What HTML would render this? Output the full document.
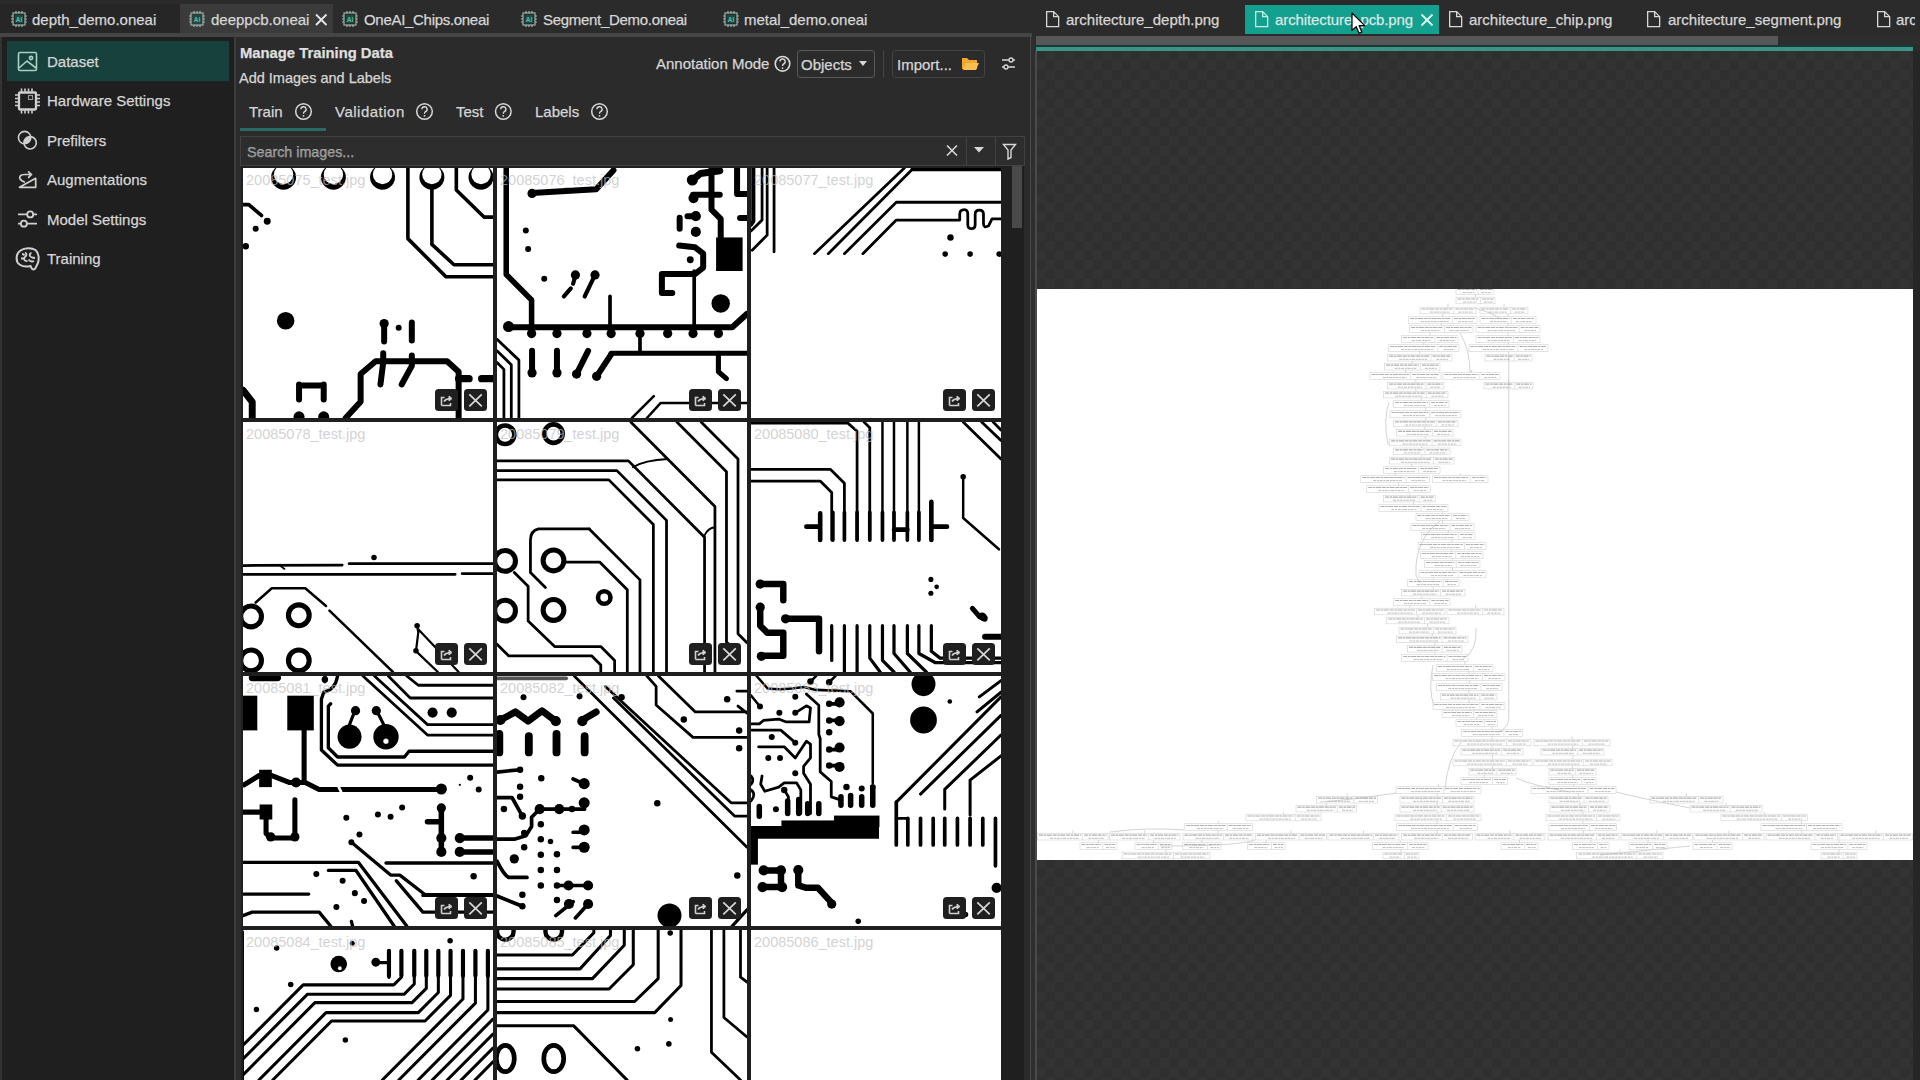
<!DOCTYPE html>
<html><head><meta charset="utf-8">
<style>
*{margin:0;padding:0;box-sizing:border-box}
html,body{width:1920px;height:1080px;overflow:hidden;background:#2b2b2b;font-family:"Liberation Sans",sans-serif;color:#d8d8d8}
.a{position:absolute}
.t{position:absolute;font-size:15px;line-height:17px;white-space:nowrap;color:#d6d6d6;-webkit-text-stroke:.25px #d6d6d6}
#viewer{left:1036px;top:51px;width:878px;height:1029px;background-color:#2f2f2f;
 background-image:linear-gradient(45deg,#333 25%,transparent 25%,transparent 75%,#333 75%),linear-gradient(45deg,#333 25%,transparent 25%,transparent 75%,#333 75%);
 background-size:19px 19px;background-position:0 0,9.5px 9.5px}
#arch{left:1037px;top:289px;width:876px;height:571px;background:#fff}
.tile{position:absolute;width:251px;height:250px;background:#fff;overflow:hidden}
.tile svg{position:absolute;left:0;top:0}
.lbl{position:absolute;left:3px;top:4px;font-size:14.5px;line-height:17px;color:rgba(190,190,190,.7);white-space:nowrap}
.btn{position:absolute;top:221px;width:23px;height:22px;background:#1f1f1f;border-radius:3.5px}
</style></head><body>
<div id="viewer" class="a"></div>
<div id="arch" class="a"></div>
<!-- LEFT TAB BAR -->
<div class="a" style="left:0;top:0;width:1032px;height:33px;background:#2b2b2b"></div>
<div class="a" style="left:0;top:4px;width:180px;height:29px;background:#262626"></div>
<div class="a" style="left:180px;top:4px;width:153px;height:29px;background:#3b3b3b"></div>
<div class="a" style="left:0;top:33px;width:1032px;height:4px;background:#454545"></div>
<svg class="a" style="left:0;top:0" width="1032" height="33">
 
 <g transform="translate(10,10)">
  <rect x="3" y="3" width="12" height="12" fill="none" stroke="#8fa8a0" stroke-width="1.3"/>
  <rect x="5" y="5" width="8" height="8" fill="#1d4a40"/>
  <path d="M6 1v2M9 1v2M12 1v2M6 15v2M9 15v2M12 15v2M1 6h2M1 9h2M1 12h2M15 6h2M15 9h2M15 12h2" stroke="#a8b8b2" stroke-width="1.2"/>
  <text x="9" y="11.5" font-size="6.5" text-anchor="middle" fill="#4fc0a8" font-family="Liberation Sans" font-weight="bold">AI</text>
 </g>
 <g transform="translate(188,10)">
  <rect x="3" y="3" width="12" height="12" fill="none" stroke="#8fa8a0" stroke-width="1.3"/>
  <rect x="5" y="5" width="8" height="8" fill="#1d4a40"/>
  <path d="M6 1v2M9 1v2M12 1v2M6 15v2M9 15v2M12 15v2M1 6h2M1 9h2M1 12h2M15 6h2M15 9h2M15 12h2" stroke="#a8b8b2" stroke-width="1.2"/>
  <text x="9" y="11.5" font-size="6.5" text-anchor="middle" fill="#4fc0a8" font-family="Liberation Sans" font-weight="bold">AI</text>
 </g>
 <g transform="translate(341,10)">
  <rect x="3" y="3" width="12" height="12" fill="none" stroke="#8fa8a0" stroke-width="1.3"/>
  <rect x="5" y="5" width="8" height="8" fill="#1d4a40"/>
  <path d="M6 1v2M9 1v2M12 1v2M6 15v2M9 15v2M12 15v2M1 6h2M1 9h2M1 12h2M15 6h2M15 9h2M15 12h2" stroke="#a8b8b2" stroke-width="1.2"/>
  <text x="9" y="11.5" font-size="6.5" text-anchor="middle" fill="#4fc0a8" font-family="Liberation Sans" font-weight="bold">AI</text>
 </g>
 <g transform="translate(520,10)">
  <rect x="3" y="3" width="12" height="12" fill="none" stroke="#8fa8a0" stroke-width="1.3"/>
  <rect x="5" y="5" width="8" height="8" fill="#1d4a40"/>
  <path d="M6 1v2M9 1v2M12 1v2M6 15v2M9 15v2M12 15v2M1 6h2M1 9h2M1 12h2M15 6h2M15 9h2M15 12h2" stroke="#a8b8b2" stroke-width="1.2"/>
  <text x="9" y="11.5" font-size="6.5" text-anchor="middle" fill="#4fc0a8" font-family="Liberation Sans" font-weight="bold">AI</text>
 </g>
 <g transform="translate(722,10)">
  <rect x="3" y="3" width="12" height="12" fill="none" stroke="#8fa8a0" stroke-width="1.3"/>
  <rect x="5" y="5" width="8" height="8" fill="#1d4a40"/>
  <path d="M6 1v2M9 1v2M12 1v2M6 15v2M9 15v2M12 15v2M1 6h2M1 9h2M1 12h2M15 6h2M15 9h2M15 12h2" stroke="#a8b8b2" stroke-width="1.2"/>
  <text x="9" y="11.5" font-size="6.5" text-anchor="middle" fill="#4fc0a8" font-family="Liberation Sans" font-weight="bold">AI</text>
 </g>
 <path d="M316 14.5l10.5 10.5M326.5 14.5l-10.5 10.5" stroke="#e8e8e8" stroke-width="1.8"/>
</svg>
<div class="t" style="left:32px;top:11px">depth_demo.oneai</div>
<div class="t" style="left:211px;top:11px">deeppcb.oneai</div>
<div class="t" style="left:364px;top:11px;letter-spacing:-.3px">OneAI_Chips.oneai</div>
<div class="t" style="left:543px;top:11px;letter-spacing:-.3px">Segment_Demo.oneai</div>
<div class="t" style="left:744px;top:11px">metal_demo.oneai</div>

<!-- SIDEBAR -->
<div class="a" style="left:2px;top:37px;width:232px;height:1043px;background:#1f1f1f"></div>
<div class="a" style="left:0;top:37px;width:2px;height:1043px;background:#333"></div>
<div class="a" style="left:7px;top:41px;width:222px;height:40px;background:#17413d"></div>
<div class="a" style="left:234px;top:37px;width:2px;height:1043px;background:#3c3c3c"></div>
<svg class="a" style="left:0;top:37px" width="233" height="240" fill="none" stroke="#d0d0d0" stroke-width="1.6">
 <!-- dataset -->
 <rect x="18.5" y="15.5" width="18" height="18" rx="1.5" stroke="#a9cfc7"/>
 <path d="M19 31l8-7 9 7" stroke="#a9cfc7"/>
 <circle cx="31" cy="21" r="1.6" stroke="#a9cfc7"/>
 <!-- hardware -->
 <rect x="19" y="55.5" width="17" height="17" rx="1" stroke-width="2.3"/>
 <rect x="28.5" y="58.5" width="4" height="4" stroke-width="1.1" stroke="#9a9a9a"/>
 <path d="M21.5 51.5v3M25 51.5v3M28.5 51.5v3M32 51.5v3M21.5 73.5v3M25 73.5v3M28.5 73.5v3M32 73.5v3M15 58h3M15 61.5h3M15 65h3M15 68.5h3M37 58h3M37 61.5h3M37 65h3M37 68.5h3" stroke-width="1.6"/>
 <!-- prefilters -->
 <path d="M23.98 106.77A6.2 6.2 0 0 1 30.72 99.63A6.2 6.2 0 0 1 23.98 106.77Z" fill="#d0d0d0" stroke="none"/>
 <circle cx="24.6" cy="100.6" r="6.2"/>
 <circle cx="30.1" cy="105.8" r="6.2"/>
 <!-- augmentations -->
 <path d="M19.5 150.3H35.7V141.3Z" stroke-linejoin="round" stroke-width="1.7"/>
 <path d="M24.3 145c-3.5-1.5-5.5-3.5-4.3-5.7c1-1.6 3-1.8 5-1.8h6.2M28.6 134.8l2.8 2.7-2.8 2.8" stroke-width="1.7" stroke-linecap="round"/>
 <!-- model settings -->
 <path d="M18 177.4h19M18 186.7h19" stroke-width="1.8"/>
 <circle cx="30.2" cy="177.4" r="3" fill="#1f1f1f" stroke-width="1.8"/>
 <circle cx="23.9" cy="186.7" r="3" fill="#1f1f1f" stroke-width="1.8"/>
 <!-- training brain -->
 <path d="M19.5 227.5C15.5 225 15.5 216.5 20.5 213.5C24.5 210.5 32 210.5 35.5 213C39 216 39.5 223 37.5 227L35.5 231C34.5 233 32.5 233 31.5 231L30.5 229C26.5 230 22.5 229.5 19.5 227.5Z" stroke-width="2"/>
 <path d="M21 221.5h3.5M25 215.5c2 1 2 3 0 4.5c-2 1.5-.5 4.5 2.5 4M31.5 216c-2.5 .5-2.5 3.5 .5 4.5l3 .5M28.5 222.5c1.5 2 3.5 2.5 5.5 1.5M22 217c1 0 2 .5 2.5 1.5" stroke-width="1.8"/>
</svg>
<div class="t" style="left:47px;top:53px">Dataset</div>
<div class="t" style="left:47px;top:92px">Hardware Settings</div>
<div class="t" style="left:47px;top:132px">Prefilters</div>
<div class="t" style="left:47px;top:171px">Augmentations</div>
<div class="t" style="left:47px;top:211px">Model Settings</div>
<div class="t" style="left:47px;top:250px">Training</div>

<!-- MAIN PANEL -->
<div class="a" style="left:236px;top:37px;width:795px;height:1043px;background:#2b2b2b"></div>
<div class="t" style="left:240px;top:45px;font-weight:bold;font-size:14.8px;color:#e0e0e0">Manage Training Data</div>
<div class="t" style="left:239px;top:70px;font-size:14.5px">Add Images and Labels</div>
<div class="t" style="left:656px;top:55px">Annotation Mode</div>
<svg class="a" style="left:640px;top:40px" width="390" height="50" fill="none" stroke="#d8d8d8">
 <circle cx="142.5" cy="23.8" r="7.3" stroke-width="1.6"/><path d="M140 21.6a2.6 2.6 0 1 1 3.6 2.4c-.9.4-1 1-1 2" stroke-width="1.4"/><circle cx="142.5" cy="28.1" r=".9" fill="#d8d8d8" stroke="none"/>
 <rect x="157.5" y="10.5" width="77" height="27" rx="3" stroke="#5a5a5a"/>
 <path d="M219 21h8l-4 5z" fill="#d8d8d8" stroke="none"/>
 <path d="M243.5 10v28" stroke="#444"/>
 <rect x="252.5" y="10.5" width="92" height="27" rx="3" stroke="#444"/>
 <path d="M322 18h5l2 2h8v9h-15z" fill="#f0a830" stroke="none"/>
 <path d="M323 30l3-7h13l-3 7z" fill="#f7be50" stroke="none"/>
 <path d="M362 20h13M362 27h13" stroke-width="1.4"/>
 <circle cx="371" cy="20" r="2" fill="#2b2b2b" stroke-width="1.3"/>
 <circle cx="366" cy="27" r="2" fill="#2b2b2b" stroke-width="1.3"/>
</svg>
<div class="t" style="left:801px;top:56px">Objects</div>
<div class="t" style="left:897px;top:56px">Import...</div>
<div class="t" style="left:249px;top:103px">Train</div>
<div class="t" style="left:335px;top:103px;letter-spacing:.5px">Validation</div>
<div class="t" style="left:456px;top:103px">Test</div>
<div class="t" style="left:535px;top:103px">Labels</div>
<svg class="a" style="left:236px;top:90px" width="400" height="50" fill="none" stroke="#d8d8d8" stroke-width="1.5">
 
 <g transform="translate(67.5,21.5)"><circle cx="0" cy="0" r="7.8"/><path d="M-2.6 -2.2a2.6 2.6 0 1 1 3.6 2.4c-.9.4-1 1-1 2" stroke-width="1.4"/><circle cx="0" cy="4.3" r=".9" fill="#d8d8d8" stroke="none"/></g>
 <g transform="translate(188.5,21.5)"><circle cx="0" cy="0" r="7.8"/><path d="M-2.6 -2.2a2.6 2.6 0 1 1 3.6 2.4c-.9.4-1 1-1 2" stroke-width="1.4"/><circle cx="0" cy="4.3" r=".9" fill="#d8d8d8" stroke="none"/></g>
 <g transform="translate(267.3,21.5)"><circle cx="0" cy="0" r="7.8"/><path d="M-2.6 -2.2a2.6 2.6 0 1 1 3.6 2.4c-.9.4-1 1-1 2" stroke-width="1.4"/><circle cx="0" cy="4.3" r=".9" fill="#d8d8d8" stroke="none"/></g>
 <g transform="translate(363.5,21.5)"><circle cx="0" cy="0" r="7.8"/><path d="M-2.6 -2.2a2.6 2.6 0 1 1 3.6 2.4c-.9.4-1 1-1 2" stroke-width="1.4"/><circle cx="0" cy="4.3" r=".9" fill="#d8d8d8" stroke="none"/></g>
 <path d="M4 39.5h86" stroke="#2a6a62" stroke-width="3"/>
</svg>
<!-- search -->
<div class="a" style="left:240px;top:136px;width:785px;height:30px;background:#2d2d2d;border:1px solid #414141"></div>
<div class="a" style="left:966px;top:137px;width:1px;height:28px;background:#414141"></div>
<div class="a" style="left:995px;top:137px;width:1px;height:28px;background:#414141"></div>
<div class="t" style="left:247px;top:144px;color:#8a8a8a;font-size:14.3px">Search images...</div>
<svg class="a" style="left:940px;top:136px" width="90" height="30" fill="none" stroke="#d8d8d8" stroke-width="1.6">
 <path d="M7 9.5l10 10M17 9.5l-10 10"/>
 <path d="M34 11h10l-5 5.5z" fill="#d8d8d8" stroke="none"/>
 <path d="M63.5 8.5h12l-4.5 5.5v7.5l-3 1.5v-9z" stroke-width="1.4"/>
</svg>
<!-- scroll area -->
<div class="a" style="left:241px;top:166px;width:783px;height:914px;background:#1f1f1f"></div>
<div class="a" style="left:1012px;top:166px;width:10px;height:62px;background:#4a4a4a"></div>
<div class="a" style="left:1030px;top:37px;width:1px;height:1043px;background:#4a4a4a"></div>
<div class="a" style="left:1031px;top:37px;width:4px;height:1043px;background:#2e2e2e"></div>

<!-- RIGHT TABS -->
<div class="a" style="left:1032px;top:0;width:888px;height:36px;background:#2b2b2b"></div>
<div class="a" style="left:1245px;top:5px;width:194px;height:29px;background:#14a08e"></div>
<svg class="a" style="left:1032px;top:0" width="888" height="36" fill="none" stroke="#d8d8d8" stroke-width="1.3">
 
 <g transform="translate(14,11)"><path d="M.65 .65h7l5 5v10h-12z M7.65 .65v5h5"/></g>
 <g transform="translate(223,11)" stroke="#c8f0ea"><path d="M.65 .65h7l5 5v10h-12z M7.65 .65v5h5"/></g>
 <g transform="translate(417,11)"><path d="M.65 .65h7l5 5v10h-12z M7.65 .65v5h5"/></g>
 <g transform="translate(615,11)"><path d="M.65 .65h7l5 5v10h-12z M7.65 .65v5h5"/></g>
 <g transform="translate(845,11)"><path d="M.65 .65h7l5 5v10h-12z M7.65 .65v5h5"/></g>
 <path d="M389.5 14.5l11 11M400.5 14.5l-11 11" stroke="#e0f5f2" stroke-width="1.8"/>
</svg>
<div class="t" style="left:1066px;top:11px">architecture_depth.png</div>
<div class="t" style="left:1275px;top:11px;color:#d8f3ef;letter-spacing:-.1px">architecture_pcb.png</div>
<div class="t" style="left:1469px;top:11px">architecture_chip.png</div>
<div class="t" style="left:1668px;top:11px">architecture_segment.png</div>
<div class="a" style="left:1896px;top:0;width:19px;height:36px;overflow:hidden"><div class="t" style="left:0;top:11px">arc</div></div>
<div class="a" style="left:1036px;top:36px;width:742px;height:9px;background:#575757"></div>
<div class="a" style="left:1778px;top:36px;width:142px;height:9px;background:#2d2d2d"></div>
<div class="a" style="left:1036px;top:45px;width:877px;height:2px;background:#173a35"></div>
<div class="a" style="left:1036px;top:47px;width:877px;height:4px;background:#3a9486"></div>
<div class="a" style="left:1035px;top:51px;width:2px;height:1029px;background:#4a4a4a"></div>
<div class="a" style="left:1913px;top:51px;width:7px;height:1029px;background:#262626"></div>
<div class="tile" style="left:243px;top:168px;width:250px"><svg width="250" height="250" viewBox="0 0 1084 1080" preserveAspectRatio="none"><g fill="none" stroke="#000" stroke-linecap="round" stroke-linejoin="round">
<circle cx="176" cy="40" r="54" fill="#000" stroke="none"/><circle cx="176" cy="28" r="42" fill="#fff" stroke="none"/><circle cx="392" cy="40" r="54" fill="#000" stroke="none"/><circle cx="392" cy="28" r="42" fill="#fff" stroke="none"/><circle cx="605" cy="40" r="54" fill="#000" stroke="none"/><circle cx="605" cy="28" r="42" fill="#fff" stroke="none"/><circle cx="819" cy="40" r="54" fill="#000" stroke="none"/><circle cx="819" cy="28" r="42" fill="#fff" stroke="none"/><circle cx="1032" cy="40" r="54" fill="#000" stroke="none"/><circle cx="1032" cy="28" r="42" fill="#fff" stroke="none"/>
<path d="M715 0V305L880 470H1084" stroke-width="15.6"/>
<path d="M819 90V330L915 418H1084" stroke-width="15.6"/>
<path d="M925 0V95L1045 212H1084" stroke-width="15.6"/>
<path d="M0 158H25L80 205" stroke-width="16"/>
<circle cx="105" cy="230" r="15" fill="#000" stroke="none"/><circle cx="55" cy="262" r="13" fill="#000" stroke="none"/><circle cx="12" cy="338" r="14" fill="#000" stroke="none"/><circle cx="185" cy="660" r="38" fill="#000" stroke="none"/><circle cx="675" cy="690" r="13" fill="#000" stroke="none"/>
<path d="M445 1080L510 1010V890L575 835H885L935 880V1080" stroke-width="26"/>
<path d="M935 910H980" stroke-width="32"/>
<path d="M1035 910H1084" stroke-width="32"/>
<path d="M612 672V750" stroke-width="26"/>
<circle cx="612" cy="672" r="20" fill="#000" stroke="none"/>
<path d="M608 800V840L596 935" stroke-width="26"/>
<path d="M732 668V745" stroke-width="26"/>
<path d="M732 810V855L688 935" stroke-width="26"/>
<path d="M243 935V1000M350 935V1000M243 940H350" stroke-width="26"/>
<circle cx="243" cy="1075" r="24" fill="#000" stroke="none"/>
<circle cx="350" cy="1075" r="24" fill="#000" stroke="none"/>
<path d="M0 960L40 1010V1080" stroke-width="30"/>
</g></svg><div class="lbl">20085075_test.jpg</div><div class="btn" style="left:192px"><svg width="23" height="22" fill="none" stroke="#d0d0d0" stroke-width="1.6"><path d="M6.5 16.5V8.5H9.5M6.5 16.5H15.5V14M9 12.5Q10.5 10 15 9.5"/><path d="M14 7l3 2.5-3 2.5z" fill="#d0d0d0" stroke-width="1"/></svg></div><div class="btn" style="left:221px"><svg width="23" height="22" stroke="#d8d8d8" stroke-width="1.7"><path d="M5.3 5.3l12.5 12M17.8 5.3l-12.5 12"/></svg></div></div>
<div class="tile" style="left:497px;top:168px;width:250px"><svg width="250" height="250" viewBox="0 0 1084 1080" preserveAspectRatio="none"><g fill="none" stroke="#000" stroke-linecap="round" stroke-linejoin="round">
<path d="M40 0V460L150 570V700" stroke-width="24"/>
<path d="M150 108L430 92L505 10" stroke-width="26"/>
<circle cx="152" cy="110" r="20" fill="#000" stroke="none"/>
<circle cx="125" cy="270" r="13" fill="#000" stroke="none"/><circle cx="135" cy="350" r="13" fill="#000" stroke="none"/><circle cx="205" cy="478" r="13" fill="#000" stroke="none"/>
<path d="M340 465L330 500M320 520L290 555" stroke-width="18"/>
<circle cx="340" cy="462" r="20" fill="#000" stroke="none"/>
<path d="M425 462L380 555" stroke-width="18"/>
<circle cx="425" cy="462" r="20" fill="#000" stroke="none"/>
<path d="M50 688H1020L1084 630" stroke-width="26"/>
<circle cx="50" cy="685" r="24" fill="#000" stroke="none"/>
<circle cx="150" cy="715" r="20" fill="#000" stroke="none"/><circle cx="260" cy="715" r="20" fill="#000" stroke="none"/><circle cx="390" cy="715" r="20" fill="#000" stroke="none"/><circle cx="495" cy="715" r="20" fill="#000" stroke="none"/><circle cx="620" cy="715" r="20" fill="#000" stroke="none"/><circle cx="740" cy="715" r="20" fill="#000" stroke="none"/><circle cx="850" cy="715" r="20" fill="#000" stroke="none"/><circle cx="960" cy="715" r="20" fill="#000" stroke="none"/>
<path d="M495 800H1084" stroke-width="22"/>
<path d="M620 690V800" stroke-width="16"/>
<path d="M490 555V690" stroke-width="16"/>
<path d="M152 790V885M260 790V885M395 790L345 890M495 805L432 900" stroke-width="26"/>
<circle cx="152" cy="885" r="20" fill="#000" stroke="none"/><circle cx="260" cy="885" r="20" fill="#000" stroke="none"/><circle cx="345" cy="890" r="20" fill="#000" stroke="none"/><circle cx="432" cy="900" r="20" fill="#000" stroke="none"/>
<path d="M960 800V880L995 910" stroke-width="22"/>
<path d="M930 0V180L970 220V300" stroke-width="26"/><path d="M847 52L882 24L966 12" stroke-width="30"/>
<rect x="950" y="300" width="115" height="145" fill="#000" stroke="none"/>
<path d="M1041 0V112H1084M850 116H966M1054 216H1084M826 208H862M792 215V262" stroke-width="26"/>
<circle cx="847" cy="52" r="24" fill="#000" stroke="none"/><circle cx="852" cy="130" r="22" fill="#000" stroke="none"/><circle cx="862" cy="208" r="22" fill="#000" stroke="none"/><circle cx="862" cy="276" r="22" fill="#000" stroke="none"/><circle cx="838" cy="396" r="15" fill="#000" stroke="none"/>
<path d="M790 335L858 342L894 370V430L858 458H715V540H760" stroke-width="26"/>
<path d="M855 445V690" stroke-width="16"/>
<circle cx="970" cy="585" r="40" fill="#000" stroke="none"/>
<path d="M0 740L95 830V1080M0 790L62 850V1080M0 840L30 870V1080" stroke-width="12"/>
<path d="M585 1080L680 985M650 1080L710 1015H1084" stroke-width="10.8"/>
</g></svg><div class="lbl">20085076_test.jpg</div><div class="btn" style="left:192px"><svg width="23" height="22" fill="none" stroke="#d0d0d0" stroke-width="1.6"><path d="M6.5 16.5V8.5H9.5M6.5 16.5H15.5V14M9 12.5Q10.5 10 15 9.5"/><path d="M14 7l3 2.5-3 2.5z" fill="#d0d0d0" stroke-width="1"/></svg></div><div class="btn" style="left:221px"><svg width="23" height="22" stroke="#d8d8d8" stroke-width="1.7"><path d="M5.3 5.3l12.5 12M17.8 5.3l-12.5 12"/></svg></div></div>
<div class="tile" style="left:751px;top:168px;width:250px"><svg width="250" height="250" viewBox="0 0 1084 1080" preserveAspectRatio="none"><g fill="none" stroke="#000" stroke-linecap="round" stroke-linejoin="round">
<path d="M10 0V230L0 245" stroke-width="18"/>
<path d="M48 0V225L0 272" stroke-width="12"/>
<path d="M70 0V290L5 355" stroke-width="12"/>
<path d="M100 0V362" stroke-width="12"/>
<path d="M275 370L665 0M335 370L705 0M405 370L630 148H1084" stroke-width="12"/>
<path d="M485 370L630 225H905V200Q905 180 925 180Q940 180 940 200V245Q940 262 957 262Q972 262 972 245V200Q972 182 990 182Q1008 182 1008 200V240Q1008 262 1030 250L1045 220H1084" stroke-width="12"/>
<path d="M700 6H1084" stroke-width="16"/>
<circle cx="865" cy="300" r="14" fill="#000" stroke="none"/><circle cx="842" cy="372" r="12" fill="#000" stroke="none"/><circle cx="950" cy="372" r="12" fill="#000" stroke="none"/><circle cx="1076" cy="372" r="12" fill="#000" stroke="none"/>
</g></svg><div class="lbl">20085077_test.jpg</div><div class="btn" style="left:192px"><svg width="23" height="22" fill="none" stroke="#d0d0d0" stroke-width="1.6"><path d="M6.5 16.5V8.5H9.5M6.5 16.5H15.5V14M9 12.5Q10.5 10 15 9.5"/><path d="M14 7l3 2.5-3 2.5z" fill="#d0d0d0" stroke-width="1"/></svg></div><div class="btn" style="left:221px"><svg width="23" height="22" stroke="#d8d8d8" stroke-width="1.7"><path d="M5.3 5.3l12.5 12M17.8 5.3l-12.5 12"/></svg></div></div>
<div class="tile" style="left:243px;top:422px;width:250px"><svg width="250" height="250" viewBox="0 0 1084 1080" preserveAspectRatio="none"><g fill="none" stroke="#000" stroke-linecap="round" stroke-linejoin="round">
<path d="M0 620L430 618M460 612H1084M0 658H920M950 655H1084" stroke-width="12"/>
<circle cx="568" cy="585" r="12" fill="#000" stroke="none"/>
<path d="M160 620L180 635" stroke-width="7.2"/>
<circle cx="35" cy="840" r="45" stroke-width="22"/>
<circle cx="242" cy="835" r="45" stroke-width="22"/>
<circle cx="35" cy="1030" r="45" stroke-width="22"/>
<circle cx="242" cy="1030" r="45" stroke-width="22"/>
<path d="M55 780L125 718H270L360 795M375 815L650 1080" stroke-width="10.8"/>
<path d="M755 880L760 910L750 990L845 1080M760 895L935 1080" stroke-width="9.6"/>
<circle cx="755" cy="880" r="12" fill="#000" stroke="none"/><circle cx="750" cy="988" r="12" fill="#000" stroke="none"/>
</g></svg><div class="lbl">20085078_test.jpg</div><div class="btn" style="left:192px"><svg width="23" height="22" fill="none" stroke="#d0d0d0" stroke-width="1.6"><path d="M6.5 16.5V8.5H9.5M6.5 16.5H15.5V14M9 12.5Q10.5 10 15 9.5"/><path d="M14 7l3 2.5-3 2.5z" fill="#d0d0d0" stroke-width="1"/></svg></div><div class="btn" style="left:221px"><svg width="23" height="22" stroke="#d8d8d8" stroke-width="1.7"><path d="M5.3 5.3l12.5 12M17.8 5.3l-12.5 12"/></svg></div></div>
<div class="tile" style="left:497px;top:422px;width:250px"><svg width="250" height="250" viewBox="0 0 1084 1080" preserveAspectRatio="none"><g fill="none" stroke="#000" stroke-linecap="round" stroke-linejoin="round">
<circle cx="35" cy="55" r="40" stroke-width="20"/>
<circle cx="245" cy="50" r="40" stroke-width="20"/>
<path d="M0 168H570L900 498V1080" stroke-width="12"/>
<path d="M0 210H520L735 425V1080" stroke-width="12"/>
<path d="M0 250H485L678 443V1080" stroke-width="12"/>
<path d="M580 0L945 365V1080" stroke-width="12"/>
<path d="M780 0L995 215V950L1040 995" stroke-width="12"/>
<path d="M885 0L1045 160V915L1084 954" stroke-width="12"/>
<path d="M590 195Q640 165 740 160M900 490Q915 458 945 455" stroke-width="8.4"/>
<path d="M400 462L620 682V1080" stroke-width="12"/>
<path d="M400 462H180Q145 470 145 510V650L210 715" stroke-width="12"/>
<path d="M295 605H445L565 725V1080" stroke-width="12"/>
<circle cx="35" cy="600" r="45" stroke-width="22"/>
<circle cx="245" cy="598" r="45" stroke-width="22"/>
<circle cx="35" cy="815" r="45" stroke-width="22"/>
<circle cx="245" cy="812" r="45" stroke-width="22"/>
<circle cx="465" cy="758" r="27" stroke-width="20"/>
<path d="M75 650L135 710V860L250 970H450L510 1030V1080" stroke-width="12"/>
<path d="M0 960L50 1010H410L450 1050V1080" stroke-width="12"/>
</g></svg><div class="lbl">20085079_test.jpg</div><div class="btn" style="left:192px"><svg width="23" height="22" fill="none" stroke="#d0d0d0" stroke-width="1.6"><path d="M6.5 16.5V8.5H9.5M6.5 16.5H15.5V14M9 12.5Q10.5 10 15 9.5"/><path d="M14 7l3 2.5-3 2.5z" fill="#d0d0d0" stroke-width="1"/></svg></div><div class="btn" style="left:221px"><svg width="23" height="22" stroke="#d8d8d8" stroke-width="1.7"><path d="M5.3 5.3l12.5 12M17.8 5.3l-12.5 12"/></svg></div></div>
<div class="tile" style="left:751px;top:422px;width:250px"><svg width="250" height="250" viewBox="0 0 1084 1080" preserveAspectRatio="none"><g fill="none" stroke="#000" stroke-linecap="round" stroke-linejoin="round">
<path d="M0 5H420L460 40V510M490 0L515 25V510" stroke-width="12"/>
<path d="M570 0V510M620 0V510M678 0V510M728 0V510" stroke-width="10.8"/>
<path d="M0 205H345L405 265V510M0 255H300L350 305V510" stroke-width="12"/>
<path d="M300 395V510M782 345V510M240 452H300M782 452H850M620 465H678" stroke-width="20"/>
<path d="M355 390V510M405 390V510M460 390V510M515 390V510M570 390V510M620 390V510M678 390V510M728 390V510" stroke-width="16"/>
<path d="M920 0L1084 160M1000 0L1084 80M1050 0L1084 35" stroke-width="12"/>
<path d="M920 235V415L1075 550" stroke-width="10.8"/>
<circle cx="920" cy="237" r="12" fill="#000" stroke="none"/>
<circle cx="780" cy="680" r="11" fill="#000" stroke="none"/><circle cx="805" cy="712" r="10" fill="#000" stroke="none"/><circle cx="780" cy="740" r="11" fill="#000" stroke="none"/>
<path d="M960 805L990 840Q1020 860 1015 845Q1005 825 990 840" stroke-width="22"/>
<path d="M35 700H140V770M40 800V880L70 910H140V1010H40M150 850H295V990" stroke-width="28"/>
<circle cx="40" cy="700" r="20" fill="#000" stroke="none"/><circle cx="40" cy="800" r="20" fill="#000" stroke="none"/><circle cx="150" cy="850" r="20" fill="#000" stroke="none"/><circle cx="45" cy="1012" r="20" fill="#000" stroke="none"/>
<path d="M1015 928H1084" stroke-width="26"/>
<path d="M350 880V1030M405 880V1080M460 880V1080M515 880V1020L560 1080M570 880V1030L620 1080M620 880V1000L690 1080M678 880V1000L760 1080M728 880V1000L800 1040H1084M782 880V990L820 1020H1084" stroke-width="14"/>
</g></svg><div class="lbl">20085080_test.jpg</div><div class="btn" style="left:192px"><svg width="23" height="22" fill="none" stroke="#d0d0d0" stroke-width="1.6"><path d="M6.5 16.5V8.5H9.5M6.5 16.5H15.5V14M9 12.5Q10.5 10 15 9.5"/><path d="M14 7l3 2.5-3 2.5z" fill="#d0d0d0" stroke-width="1"/></svg></div><div class="btn" style="left:221px"><svg width="23" height="22" stroke="#d8d8d8" stroke-width="1.7"><path d="M5.3 5.3l12.5 12M17.8 5.3l-12.5 12"/></svg></div></div>
<div class="tile" style="left:243px;top:676px;width:250px"><svg width="250" height="250" viewBox="0 0 1084 1080" preserveAspectRatio="none"><g fill="none" stroke="#000" stroke-linecap="round" stroke-linejoin="round">
<path d="M40 8H150" stroke-width="30"/><circle cx="355" cy="15" r="14" fill="#000" stroke="none"/>
<rect x="0" y="85" width="62" height="150" fill="#000" stroke="none"/>
<rect x="192" y="85" width="115" height="150" fill="#000" stroke="none"/>
<path d="M265 230V460M5 470L70 430H125L200 460L270 460L330 490H860" stroke-width="22"/>
<rect x="70" y="405" width="55" height="75" fill="#000" stroke="none"/>
<circle cx="230" cy="460" r="22" fill="#000" stroke="none"/>
<circle cx="860" cy="488" r="24" fill="#000" stroke="none"/>
<path d="M415 480L425 500" stroke="#fff" stroke-width="12"/>
<path d="M0 588H100V680L120 700H225V535" stroke-width="22"/>
<rect x="72" y="555" width="55" height="65" fill="#000" stroke="none"/>
<circle cx="120" cy="695" r="20" fill="#000" stroke="none"/><circle cx="225" cy="695" r="20" fill="#000" stroke="none"/>
<path d="M355 0V25M410 0Q400 60 350 70L340 100V320L410 385H1084M380 120L370 130V310L410 350H700L720 325H1084" stroke-width="14.4"/>
<path d="M520 0L800 255H1084M570 0L800 210H1084M630 0L725 95H1084M710 0L760 40H1084" stroke-width="12"/>
<circle cx="462" cy="262" r="52" fill="#000" stroke="none"/>
<circle cx="620" cy="262" r="55" fill="#000" stroke="none"/>
<circle cx="620" cy="282" r="12" fill="#fff"/>
<path d="M460 215L485 150M610 210L580 150" stroke-width="14"/>
<circle cx="488" cy="150" r="20" fill="#000" stroke="none"/><circle cx="578" cy="150" r="20" fill="#000" stroke="none"/><circle cx="822" cy="158" r="22" fill="#000" stroke="none"/><circle cx="905" cy="158" r="22" fill="#000" stroke="none"/><circle cx="985" cy="440" r="13" fill="#000" stroke="none"/><circle cx="1022" cy="490" r="13" fill="#000" stroke="none"/><circle cx="940" cy="470" r="5" fill="#000" stroke="none"/><circle cx="448" cy="612" r="13" fill="#000" stroke="none"/><circle cx="585" cy="598" r="13" fill="#000" stroke="none"/><circle cx="640" cy="608" r="13" fill="#000" stroke="none"/><circle cx="690" cy="568" r="13" fill="#000" stroke="none"/><circle cx="505" cy="685" r="13" fill="#000" stroke="none"/><circle cx="470" cy="718" r="13" fill="#000" stroke="none"/><circle cx="318" cy="855" r="13" fill="#000" stroke="none"/><circle cx="432" cy="885" r="13" fill="#000" stroke="none"/><circle cx="485" cy="938" r="13" fill="#000" stroke="none"/><circle cx="525" cy="972" r="13" fill="#000" stroke="none"/><circle cx="405" cy="998" r="13" fill="#000" stroke="none"/><circle cx="1000" cy="865" r="14" fill="#000" stroke="none"/>
<path d="M860 570V760M800 630H860M940 700H1084M940 760H1084" stroke-width="24"/>
<circle cx="860" cy="570" r="20" fill="#000" stroke="none"/><circle cx="860" cy="700" r="22" fill="#000" stroke="none"/><circle cx="860" cy="760" r="22" fill="#000" stroke="none"/><circle cx="940" cy="700" r="22" fill="#000" stroke="none"/><circle cx="940" cy="760" r="22" fill="#000" stroke="none"/>
<path d="M0 805H500L710 1080M470 718L640 860L680 860L790 945H1084M620 808H1084M370 840H490L655 1080M665 885L780 1020H1084M780 948H1084" stroke-width="14.4"/>
<path d="M0 942H285M0 1035L40 1020H330L380 1080M470 1060L475 1080" stroke-width="14.4"/>
</g></svg><div class="lbl">20085081_test.jpg</div><div class="btn" style="left:192px"><svg width="23" height="22" fill="none" stroke="#d0d0d0" stroke-width="1.6"><path d="M6.5 16.5V8.5H9.5M6.5 16.5H15.5V14M9 12.5Q10.5 10 15 9.5"/><path d="M14 7l3 2.5-3 2.5z" fill="#d0d0d0" stroke-width="1"/></svg></div><div class="btn" style="left:221px"><svg width="23" height="22" stroke="#d8d8d8" stroke-width="1.7"><path d="M5.3 5.3l12.5 12M17.8 5.3l-12.5 12"/></svg></div></div>
<div class="tile" style="left:497px;top:676px;width:250px"><svg width="250" height="250" viewBox="0 0 1084 1080" preserveAspectRatio="none"><g fill="none" stroke="#000" stroke-linecap="round" stroke-linejoin="round">
<path d="M0 10H300" stroke="#555" stroke-width="16"/>
<path d="M15 190L80 155L135 195L195 150L255 195M370 190L430 155" stroke-width="30"/>
<circle cx="15" cy="190" r="22" fill="#000" stroke="none"/><circle cx="255" cy="195" r="22" fill="#000" stroke="none"/><circle cx="370" cy="195" r="22" fill="#000" stroke="none"/><circle cx="115" cy="92" r="13" fill="#000" stroke="none"/><circle cx="358" cy="88" r="13" fill="#000" stroke="none"/>
<path d="M10 250V330M138 260V330M258 250V330M380 260V330" stroke-width="34"/>
<path d="M0 415L100 405M0 525L65 525L110 605M0 705L75 705L125 690L150 650V610L185 575H380M0 800Q30 860 50 870H130M0 950L110 995M255 1035L330 975M340 1045L395 985M255 905H400M330 675H380M330 740H380M330 445L375 465" stroke-width="16"/>
<circle cx="100" cy="405" r="14" fill="#000" stroke="none"/><circle cx="192" cy="442" r="14" fill="#000" stroke="none"/><circle cx="100" cy="478" r="14" fill="#000" stroke="none"/><circle cx="100" cy="522" r="14" fill="#000" stroke="none"/><circle cx="30" cy="575" r="14" fill="#000" stroke="none"/><circle cx="110" cy="605" r="16" fill="#000" stroke="none"/><circle cx="185" cy="575" r="22" fill="#000" stroke="none"/><circle cx="270" cy="575" r="22" fill="#000" stroke="none"/><circle cx="325" cy="575" r="14" fill="#000" stroke="none"/><circle cx="378" cy="548" r="24" fill="#000" stroke="none"/><circle cx="378" cy="465" r="24" fill="#000" stroke="none"/><circle cx="118" cy="678" r="14" fill="#000" stroke="none"/><circle cx="190" cy="640" r="14" fill="#000" stroke="none"/><circle cx="190" cy="705" r="14" fill="#000" stroke="none"/><circle cx="232" cy="715" r="12" fill="#000" stroke="none"/><circle cx="118" cy="740" r="14" fill="#000" stroke="none"/><circle cx="190" cy="772" r="14" fill="#000" stroke="none"/><circle cx="260" cy="770" r="14" fill="#000" stroke="none"/><circle cx="190" cy="838" r="14" fill="#000" stroke="none"/><circle cx="260" cy="838" r="14" fill="#000" stroke="none"/><circle cx="190" cy="905" r="14" fill="#000" stroke="none"/><circle cx="260" cy="905" r="14" fill="#000" stroke="none"/><circle cx="310" cy="905" r="22" fill="#000" stroke="none"/><circle cx="395" cy="905" r="22" fill="#000" stroke="none"/><circle cx="110" cy="945" r="14" fill="#000" stroke="none"/><circle cx="110" cy="995" r="14" fill="#000" stroke="none"/><circle cx="260" cy="968" r="14" fill="#000" stroke="none"/><circle cx="312" cy="985" r="22" fill="#000" stroke="none"/><circle cx="395" cy="985" r="22" fill="#000" stroke="none"/><circle cx="378" cy="665" r="24" fill="#000" stroke="none"/><circle cx="378" cy="740" r="24" fill="#000" stroke="none"/><circle cx="75" cy="790" r="20" fill="#000" stroke="none"/><circle cx="540" cy="92" r="14" fill="#000" stroke="none"/><circle cx="695" cy="550" r="14" fill="#000" stroke="none"/><circle cx="810" cy="188" r="14" fill="#000" stroke="none"/><circle cx="998" cy="100" r="14" fill="#000" stroke="none"/><circle cx="1050" cy="235" r="14" fill="#000" stroke="none"/><circle cx="1050" cy="312" r="14" fill="#000" stroke="none"/><circle cx="1042" cy="862" r="14" fill="#000" stroke="none"/>
<path d="M335 0L1084 740M470 45L1015 548H1084M505 95L1030 605H1084" stroke-width="12"/>
<path d="M650 0L690 45V125L850 265H1084M700 0L860 155H1084M1040 65H1084M1045 130L1084 160" stroke-width="12"/>
<circle cx="748" cy="1035" r="52" fill="#000" stroke="none"/>
<path d="M1020 1080L1084 1010" stroke-width="14.4"/>
</g></svg><div class="lbl">20085082_test.jpg</div><div class="btn" style="left:192px"><svg width="23" height="22" fill="none" stroke="#d0d0d0" stroke-width="1.6"><path d="M6.5 16.5V8.5H9.5M6.5 16.5H15.5V14M9 12.5Q10.5 10 15 9.5"/><path d="M14 7l3 2.5-3 2.5z" fill="#d0d0d0" stroke-width="1"/></svg></div><div class="btn" style="left:221px"><svg width="23" height="22" stroke="#d8d8d8" stroke-width="1.7"><path d="M5.3 5.3l12.5 12M17.8 5.3l-12.5 12"/></svg></div></div>
<div class="tile" style="left:751px;top:676px;width:250px"><svg width="250" height="250" viewBox="0 0 1084 1080" preserveAspectRatio="none"><g fill="none" stroke="#000" stroke-linecap="round" stroke-linejoin="round">
<circle cx="748" cy="35" r="52" fill="#000" stroke="none"/>
<circle cx="748" cy="190" r="58" fill="#000" stroke="none"/>
<circle cx="862" cy="110" r="10" fill="#000" stroke="none"/>
<path d="M990 90L1084 20M980 155L1084 70M630 545L1084 90M735 510L1084 170M840 490V575M840 490L1084 255M950 450V600M950 450L1084 345" stroke-width="13"/>
<path d="M630 545V730M680 615V730M735 615V730M790 615V730M840 615V730M895 615V730M950 615V730M1005 615V730M1060 615V820" stroke-width="16"/>
<path d="M630 615H680" stroke-width="12"/>
<rect x="0" y="648" width="555" height="55" fill="#000" stroke="none"/>
<rect x="132" y="624" width="233" height="30" fill="#000" stroke="none"/>
<rect x="360" y="603" width="197" height="50" fill="#000" stroke="none"/>
<rect x="0" y="700" width="30" height="115" fill="#000" stroke="none"/>
<path d="M24 0L72 54Q150 62 228 48L282 60L432 66L528 162V462" stroke-width="11"/>
<path d="M282 0L258 24M366 0L339 27" stroke-width="11"/>
<circle cx="258" cy="24" r="14" fill="#000" stroke="none"/><circle cx="339" cy="27" r="14" fill="#000" stroke="none"/>
<path d="M240 78L294 126V252L300 270V414L348 456V522L384 534" stroke-width="12"/>
<path d="M339 120H384M339 192H384M339 318H384M339 387H384" stroke-width="16"/>
<circle cx="384" cy="114" r="22" fill="#000" stroke="none"/><circle cx="384" cy="195" r="22" fill="#000" stroke="none"/><circle cx="384" cy="309" r="22" fill="#000" stroke="none"/><circle cx="384" cy="393" r="22" fill="#000" stroke="none"/><circle cx="339" cy="120" r="14" fill="#000" stroke="none"/><circle cx="339" cy="192" r="14" fill="#000" stroke="none"/><circle cx="339" cy="243" r="14" fill="#000" stroke="none"/><circle cx="339" cy="318" r="14" fill="#000" stroke="none"/><circle cx="339" cy="387" r="14" fill="#000" stroke="none"/>
<path d="M0 84L39 132" stroke-width="11"/>
<path d="M192 159L240 129L258 138L252 198H150L120 186L54 192L36 207H0" stroke-width="12"/>
<path d="M0 234H129L192 288" stroke-width="12"/>
<path d="M33 306H144L192 354L240 282L258 294V354L228 390V420L258 468V594" stroke-width="12"/>
<path d="M48 432L42 468L60 498L120 480L144 462H198L216 492V594" stroke-width="12"/>
<path d="M144 492L162 522V594" stroke-width="12"/>
<path d="M0 432Q15 450 0 468M0 492Q24 510 0 540" stroke-width="12"/>
<circle cx="39" cy="132" r="13" fill="#000" stroke="none"/><circle cx="192" cy="90" r="13" fill="#000" stroke="none"/><circle cx="123" cy="159" r="13" fill="#000" stroke="none"/><circle cx="192" cy="159" r="13" fill="#000" stroke="none"/><circle cx="192" cy="288" r="13" fill="#000" stroke="none"/><circle cx="90" cy="264" r="13" fill="#000" stroke="none"/><circle cx="75" cy="354" r="13" fill="#000" stroke="none"/><circle cx="126" cy="354" r="13" fill="#000" stroke="none"/><circle cx="192" cy="420" r="13" fill="#000" stroke="none"/><circle cx="144" cy="492" r="14" fill="#000" stroke="none"/><circle cx="108" cy="576" r="13" fill="#000" stroke="none"/><circle cx="414" cy="480" r="14" fill="#000" stroke="none"/><circle cx="480" cy="486" r="13" fill="#000" stroke="none"/><circle cx="528" cy="480" r="12" fill="#000" stroke="none"/>
<path d="M36 564V606M159 540V594M207 534V594M246 552V594M294 552V594M390 522V558M432 516V558M480 522V558M528 480V558" stroke-width="24"/>
<path d="M55 840H130V910M50 912H135M205 838V905L240 915H290L350 980" stroke-width="28"/>
<circle cx="55" cy="840" r="22" fill="#000" stroke="none"/><circle cx="130" cy="840" r="22" fill="#000" stroke="none"/><circle cx="50" cy="912" r="22" fill="#000" stroke="none"/><circle cx="135" cy="912" r="22" fill="#000" stroke="none"/><circle cx="205" cy="838" r="22" fill="#000" stroke="none"/><circle cx="350" cy="985" r="20" fill="#000" stroke="none"/><circle cx="1065" cy="915" r="22" fill="#000" stroke="none"/><circle cx="930" cy="1030" r="12" fill="#000" stroke="none"/><circle cx="465" cy="1060" r="12" fill="#000" stroke="none"/>
</g></svg><div class="lbl">20085083_test.jpg</div><div class="btn" style="left:192px"><svg width="23" height="22" fill="none" stroke="#d0d0d0" stroke-width="1.6"><path d="M6.5 16.5V8.5H9.5M6.5 16.5H15.5V14M9 12.5Q10.5 10 15 9.5"/><path d="M14 7l3 2.5-3 2.5z" fill="#d0d0d0" stroke-width="1"/></svg></div><div class="btn" style="left:221px"><svg width="23" height="22" stroke="#d8d8d8" stroke-width="1.7"><path d="M5.3 5.3l12.5 12M17.8 5.3l-12.5 12"/></svg></div></div>
<div class="tile" style="left:243px;top:930px;width:250px"><svg width="250" height="150" viewBox="0 0 1807 1080" preserveAspectRatio="none"><g fill="none" stroke="#000" stroke-linecap="round" stroke-linejoin="round">
<path d="M0 10V1080" stroke-width="14"/>
<circle cx="243" cy="130" r="20" fill="#000" stroke="none"/><circle cx="790" cy="95" r="18" fill="#000" stroke="none"/><circle cx="1497" cy="78" r="20" fill="#000" stroke="none"/><circle cx="345" cy="392" r="20" fill="#000" stroke="none"/><circle cx="97" cy="573" r="20" fill="#000" stroke="none"/><circle cx="740" cy="792" r="20" fill="#000" stroke="none"/>
<circle cx="692" cy="245" r="60" fill="#000" stroke="none"/>
<circle cx="700" cy="275" r="14" fill="#fff"/>
<path d="M960 235H1055M1055 150V340" stroke-width="24"/>
<path d="M1145 150V340L1090 395H435L0 830M1238 150V389L1164 463H465L0 928M1325 150V420L1222 523H520L0 1043M1412 150V450L1267 595H600L115 1080M1500 150V471L1316 655H640L215 1080M1590 150V497L1007 1080M1680 150V526L1126 1080M1770 150V576L1266 1080M1807 641L1368 1080M1807 749L1476 1080M1807 850L1577 1080M1807 950L1677 1080" stroke-width="22"/>
<path d="M1055 150V330M1145 150V330M1238 150V330M1325 150V330M1412 150V330M1500 150V330M1590 150V330M1680 150V330M1770 150V330" stroke-width="30"/>
<circle cx="960" cy="232" r="32" fill="#000" stroke="none"/>
</g></svg><div class="lbl">20085084_test.jpg</div></div>
<div class="tile" style="left:497px;top:930px;width:250px"><svg width="250" height="150" viewBox="0 0 1807 1080" preserveAspectRatio="none"><g fill="none" stroke="#000" stroke-linecap="round" stroke-linejoin="round">
<circle cx="60" cy="10" r="60" stroke-width="32"/>
<circle cx="410" cy="10" r="60" stroke-width="32"/>
<path d="M0 180H545L700 20V0M0 280H600L820 40V0M0 350H690L920 110V0M0 425H810L985 250V0M0 515H995L1165 350V0M0 595H1140L1330 400V0M0 690H555L940 1080" stroke-width="22"/>
<path d="M1550 0V880L1760 1080M1640 0V630L1807 770M1760 0V340L1807 375" stroke-width="20"/>
<ellipse cx="60" cy="925" rx="65" ry="95" stroke-width="34"/>
<ellipse cx="410" cy="925" rx="72" ry="95" stroke-width="34"/>
<circle cx="1252" cy="22" r="20" fill="#000" stroke="none"/><circle cx="1255" cy="645" r="18" fill="#000" stroke="none"/><circle cx="1015" cy="855" r="20" fill="#000" stroke="none"/><circle cx="1242" cy="820" r="20" fill="#000" stroke="none"/>
</g></svg><div class="lbl">20085085_test.jpg</div></div>
<div class="tile" style="left:751px;top:930px;width:250px"><svg width="250" height="150" viewBox="0 0 1807 1080" preserveAspectRatio="none"><g fill="none" stroke="#000" stroke-linecap="round" stroke-linejoin="round"></g></svg><div class="lbl">20085086_test.jpg</div></div><div class="a" style="left:1037px;top:289px;width:876px;height:571px;overflow:hidden"><svg width="876" height="571" viewBox="1037 289 876 571"><g fill="none" stroke="#c8c8c8" stroke-width=".8">
<path d="M1508.8 357V720Q1508 728 1497 733"/>
<path d="M1460 333Q1470 350 1470 372"/>
<path d="M1389 402Q1383 420 1388 445"/>
<path d="M1475 308Q1490 312 1500 318"/>
<path d="M1441 520Q1414 540 1416 575Q1418 580 1420 583"/>
<path d="M1476 628Q1478 650 1462 660"/>
<path d="M1433 665Q1428 690 1434 706"/>
<path d="M1461 742Q1447 760 1445 790"/>
<path d="M1516 778Q1530 785 1570 792"/>
<path d="M1396 793Q1350 800 1320 802"/>
<path d="M1616 792Q1640 798 1690 808"/>
<path d="M1110 832Q1150 827 1184 830"/>
<path d="M1160 846Q1240 846 1255 840"/>
<path d="M1600 855Q1630 852 1690 846"/>

</g><rect x="1456.0" y="287.7" width="38.0" height="6.6" fill="none" stroke="#d2d2d2" stroke-width=".6"/><path d="M1457.5 289.5H1476.8M1479.8 289.5H1492.5" stroke="#b0b0b0" stroke-width="1.2" stroke-dasharray="4 .7 2.5 .6 5 .8"/><path d="M1462.8 292.6H1474.3M1481.3 292.6H1491.7" stroke="#bcbcbc" stroke-width="1" stroke-dasharray="3 .8 2 .6"/><path d="M1478.3 287.7V294.3" stroke="#d0d0d0" stroke-width=".6"/><rect x="1456.0" y="297.2" width="39.0" height="6.6" fill="none" stroke="#d2d2d2" stroke-width=".6"/><path d="M1457.5 299.0H1479.1M1482.1 299.0H1493.5" stroke="#b0b0b0" stroke-width="1.2" stroke-dasharray="4 .7 2.5 .6 5 .8"/><path d="M1463.0 302.1H1476.6M1483.8 302.1H1492.7" stroke="#bcbcbc" stroke-width="1" stroke-dasharray="3 .8 2 .6"/><path d="M1480.6 297.2V303.8" stroke="#d0d0d0" stroke-width=".6"/><path d="M1475.5 294.3V297.2" stroke="#c0c0c0" stroke-width=".6"/><rect x="1420.0" y="307.2" width="56.0" height="6.6" fill="none" stroke="#d2d2d2" stroke-width=".6"/><path d="M1421.5 309.0H1452.4M1455.4 309.0H1474.5" stroke="#b0b0b0" stroke-width="1.2" stroke-dasharray="4 .7 2.5 .6 5 .8"/><path d="M1430.1 312.1H1449.9M1458.4 312.1H1472.6" stroke="#bcbcbc" stroke-width="1" stroke-dasharray="3 .8 2 .6"/><path d="M1453.9 307.2V313.8" stroke="#d0d0d0" stroke-width=".6"/><path d="M1448.0 303.8V307.2" stroke="#c0c0c0" stroke-width=".6"/><rect x="1480.0" y="307.2" width="48.0" height="6.6" fill="none" stroke="#d2d2d2" stroke-width=".6"/><path d="M1481.5 309.0H1509.2M1512.2 309.0H1526.5" stroke="#b0b0b0" stroke-width="1.2" stroke-dasharray="4 .7 2.5 .6 5 .8"/><path d="M1488.6 312.1H1506.7M1514.6 312.1H1525.1" stroke="#bcbcbc" stroke-width="1" stroke-dasharray="3 .8 2 .6"/><path d="M1510.7 307.2V313.8" stroke="#d0d0d0" stroke-width=".6"/><path d="M1504.0 303.8V307.2" stroke="#c0c0c0" stroke-width=".6"/><rect x="1408.6" y="316.7" width="68.4" height="6.6" fill="none" stroke="#d2d2d2" stroke-width=".6"/><path d="M1410.1 318.5H1451.1M1454.1 318.5H1475.5" stroke="#b0b0b0" stroke-width="1.2" stroke-dasharray="4 .7 2.5 .6 5 .8"/><path d="M1420.9 321.6H1448.6M1458.1 321.6H1472.9" stroke="#bcbcbc" stroke-width="1" stroke-dasharray="3 .8 2 .6"/><path d="M1452.6 316.7V323.3" stroke="#d0d0d0" stroke-width=".6"/><path d="M1442.8 313.8V316.7" stroke="#c0c0c0" stroke-width=".6"/><rect x="1480.0" y="316.7" width="56.0" height="6.6" fill="none" stroke="#d2d2d2" stroke-width=".6"/><path d="M1481.5 318.5H1509.9M1512.9 318.5H1534.5" stroke="#b0b0b0" stroke-width="1.2" stroke-dasharray="4 .7 2.5 .6 5 .8"/><path d="M1490.1 321.6H1507.4M1515.8 321.6H1532.6" stroke="#bcbcbc" stroke-width="1" stroke-dasharray="3 .8 2 .6"/><path d="M1511.4 316.7V323.3" stroke="#d0d0d0" stroke-width=".6"/><path d="M1508.0 313.8V316.7" stroke="#c0c0c0" stroke-width=".6"/><rect x="1409.6" y="325.7" width="63.4" height="6.6" fill="none" stroke="#d2d2d2" stroke-width=".6"/><path d="M1411.1 327.5H1443.1M1446.1 327.5H1471.5" stroke="#b0b0b0" stroke-width="1.2" stroke-dasharray="4 .7 2.5 .6 5 .8"/><path d="M1421.0 330.6H1440.6M1449.7 330.6H1469.2" stroke="#bcbcbc" stroke-width="1" stroke-dasharray="3 .8 2 .6"/><path d="M1444.6 325.7V332.3" stroke="#d0d0d0" stroke-width=".6"/><path d="M1441.3 323.3V325.7" stroke="#c0c0c0" stroke-width=".6"/><rect x="1476.0" y="325.7" width="64.0" height="6.6" fill="none" stroke="#d2d2d2" stroke-width=".6"/><path d="M1477.5 327.5H1517.7M1520.7 327.5H1538.5" stroke="#b0b0b0" stroke-width="1.2" stroke-dasharray="4 .7 2.5 .6 5 .8"/><path d="M1487.5 330.6H1515.2M1524.4 330.6H1536.2" stroke="#bcbcbc" stroke-width="1" stroke-dasharray="3 .8 2 .6"/><path d="M1519.2 325.7V332.3" stroke="#d0d0d0" stroke-width=".6"/><path d="M1508.0 323.3V325.7" stroke="#c0c0c0" stroke-width=".6"/><rect x="1401.6" y="335.7" width="56.4" height="6.6" fill="none" stroke="#d2d2d2" stroke-width=".6"/><path d="M1403.1 337.5H1433.3M1436.3 337.5H1456.5" stroke="#b0b0b0" stroke-width="1.2" stroke-dasharray="4 .7 2.5 .6 5 .8"/><path d="M1411.8 340.6H1430.8M1439.3 340.6H1454.6" stroke="#bcbcbc" stroke-width="1" stroke-dasharray="3 .8 2 .6"/><path d="M1434.8 335.7V342.3" stroke="#d0d0d0" stroke-width=".6"/><path d="M1429.8 332.3V335.7" stroke="#c0c0c0" stroke-width=".6"/><rect x="1476.0" y="335.7" width="64.0" height="6.6" fill="none" stroke="#d2d2d2" stroke-width=".6"/><path d="M1477.5 337.5H1511.9M1514.9 337.5H1538.5" stroke="#b0b0b0" stroke-width="1.2" stroke-dasharray="4 .7 2.5 .6 5 .8"/><path d="M1487.5 340.6H1509.4M1518.6 340.6H1536.2" stroke="#bcbcbc" stroke-width="1" stroke-dasharray="3 .8 2 .6"/><path d="M1513.4 335.7V342.3" stroke="#d0d0d0" stroke-width=".6"/><path d="M1508.0 332.3V335.7" stroke="#c0c0c0" stroke-width=".6"/><rect x="1388.6" y="344.7" width="70.4" height="6.6" fill="none" stroke="#d2d2d2" stroke-width=".6"/><path d="M1390.1 346.5H1436.3M1439.3 346.5H1457.5" stroke="#b0b0b0" stroke-width="1.2" stroke-dasharray="4 .7 2.5 .6 5 .8"/><path d="M1401.3 349.6H1433.8M1443.5 349.6H1454.8" stroke="#bcbcbc" stroke-width="1" stroke-dasharray="3 .8 2 .6"/><path d="M1437.8 344.7V351.3" stroke="#d0d0d0" stroke-width=".6"/><path d="M1423.8 342.3V344.7" stroke="#c0c0c0" stroke-width=".6"/><rect x="1469.0" y="344.7" width="79.0" height="6.6" fill="none" stroke="#d2d2d2" stroke-width=".6"/><path d="M1470.5 346.5H1516.5M1519.5 346.5H1546.5" stroke="#b0b0b0" stroke-width="1.2" stroke-dasharray="4 .7 2.5 .6 5 .8"/><path d="M1483.2 349.6H1514.0M1524.3 349.6H1543.3" stroke="#bcbcbc" stroke-width="1" stroke-dasharray="3 .8 2 .6"/><path d="M1518.0 344.7V351.3" stroke="#d0d0d0" stroke-width=".6"/><path d="M1508.5 342.3V344.7" stroke="#c0c0c0" stroke-width=".6"/><rect x="1387.6" y="354.4" width="64.4" height="6.6" fill="none" stroke="#d2d2d2" stroke-width=".6"/><path d="M1389.1 356.2H1429.6M1432.6 356.2H1450.5" stroke="#b0b0b0" stroke-width="1.2" stroke-dasharray="4 .7 2.5 .6 5 .8"/><path d="M1399.2 359.3H1427.1M1436.3 359.3H1448.1" stroke="#bcbcbc" stroke-width="1" stroke-dasharray="3 .8 2 .6"/><path d="M1431.1 354.4V361.0" stroke="#d0d0d0" stroke-width=".6"/><path d="M1419.8 351.3V354.4" stroke="#c0c0c0" stroke-width=".6"/><rect x="1485.0" y="354.4" width="47.0" height="6.6" fill="none" stroke="#d2d2d2" stroke-width=".6"/><path d="M1486.5 356.2H1512.7M1515.7 356.2H1530.5" stroke="#b0b0b0" stroke-width="1.2" stroke-dasharray="4 .7 2.5 .6 5 .8"/><path d="M1493.5 359.3H1510.2M1518.0 359.3H1529.2" stroke="#bcbcbc" stroke-width="1" stroke-dasharray="3 .8 2 .6"/><path d="M1514.2 354.4V361.0" stroke="#d0d0d0" stroke-width=".6"/><path d="M1508.5 351.3V354.4" stroke="#c0c0c0" stroke-width=".6"/><rect x="1384.7" y="363.4" width="55.3" height="6.6" fill="none" stroke="#d2d2d2" stroke-width=".6"/><path d="M1386.2 365.2H1418.9M1421.9 365.2H1438.5" stroke="#b0b0b0" stroke-width="1.2" stroke-dasharray="4 .7 2.5 .6 5 .8"/><path d="M1394.7 368.3H1416.4M1424.8 368.3H1436.7" stroke="#bcbcbc" stroke-width="1" stroke-dasharray="3 .8 2 .6"/><path d="M1420.4 363.4V370.0" stroke="#d0d0d0" stroke-width=".6"/><path d="M1412.3 361.0V363.4" stroke="#c0c0c0" stroke-width=".6"/><rect x="1370.0" y="372.7" width="71.0" height="6.6" fill="none" stroke="#d2d2d2" stroke-width=".6"/><path d="M1371.5 374.5H1409.2M1412.2 374.5H1439.5" stroke="#b0b0b0" stroke-width="1.2" stroke-dasharray="4 .7 2.5 .6 5 .8"/><path d="M1382.8 377.6H1406.7M1416.3 377.6H1436.7" stroke="#bcbcbc" stroke-width="1" stroke-dasharray="3 .8 2 .6"/><path d="M1410.7 372.7V379.3" stroke="#d0d0d0" stroke-width=".6"/><path d="M1405.5 370.0V372.7" stroke="#c0c0c0" stroke-width=".6"/><rect x="1443.0" y="372.7" width="57.0" height="6.6" fill="none" stroke="#d2d2d2" stroke-width=".6"/><path d="M1444.5 374.5H1478.3M1481.3 374.5H1498.5" stroke="#b0b0b0" stroke-width="1.2" stroke-dasharray="4 .7 2.5 .6 5 .8"/><path d="M1453.3 377.6H1475.8M1484.3 377.6H1496.6" stroke="#bcbcbc" stroke-width="1" stroke-dasharray="3 .8 2 .6"/><path d="M1479.8 372.7V379.3" stroke="#d0d0d0" stroke-width=".6"/><path d="M1471.5 370.0V372.7" stroke="#c0c0c0" stroke-width=".6"/><rect x="1387.6" y="382.3" width="56.4" height="6.6" fill="none" stroke="#d2d2d2" stroke-width=".6"/><path d="M1389.1 384.1H1424.5M1427.5 384.1H1442.5" stroke="#b0b0b0" stroke-width="1.2" stroke-dasharray="4 .7 2.5 .6 5 .8"/><path d="M1397.8 387.2H1422.0M1430.5 387.2H1440.6" stroke="#bcbcbc" stroke-width="1" stroke-dasharray="3 .8 2 .6"/><path d="M1426.0 382.3V388.9" stroke="#d0d0d0" stroke-width=".6"/><path d="M1415.8 379.3V382.3" stroke="#c0c0c0" stroke-width=".6"/><rect x="1484.0" y="382.3" width="49.0" height="6.6" fill="none" stroke="#d2d2d2" stroke-width=".6"/><path d="M1485.5 384.1H1513.3M1516.3 384.1H1531.5" stroke="#b0b0b0" stroke-width="1.2" stroke-dasharray="4 .7 2.5 .6 5 .8"/><path d="M1492.8 387.2H1510.8M1518.7 387.2H1530.1" stroke="#bcbcbc" stroke-width="1" stroke-dasharray="3 .8 2 .6"/><path d="M1514.8 382.3V388.9" stroke="#d0d0d0" stroke-width=".6"/><path d="M1508.5 379.3V382.3" stroke="#c0c0c0" stroke-width=".6"/><rect x="1383.7" y="391.3" width="64.3" height="6.6" fill="none" stroke="#d2d2d2" stroke-width=".6"/><path d="M1385.2 393.1H1424.7M1427.7 393.1H1446.5" stroke="#b0b0b0" stroke-width="1.2" stroke-dasharray="4 .7 2.5 .6 5 .8"/><path d="M1395.3 396.2H1422.2M1431.4 396.2H1444.1" stroke="#bcbcbc" stroke-width="1" stroke-dasharray="3 .8 2 .6"/><path d="M1426.2 391.3V397.9" stroke="#d0d0d0" stroke-width=".6"/><path d="M1415.8 388.9V391.3" stroke="#c0c0c0" stroke-width=".6"/><rect x="1393.6" y="400.7" width="55.4" height="6.6" fill="none" stroke="#d2d2d2" stroke-width=".6"/><path d="M1395.1 402.5H1428.1M1431.1 402.5H1447.5" stroke="#b0b0b0" stroke-width="1.2" stroke-dasharray="4 .7 2.5 .6 5 .8"/><path d="M1403.6 405.6H1425.6M1434.1 405.6H1445.7" stroke="#bcbcbc" stroke-width="1" stroke-dasharray="3 .8 2 .6"/><path d="M1429.6 400.7V407.3" stroke="#d0d0d0" stroke-width=".6"/><path d="M1421.3 397.9V400.7" stroke="#c0c0c0" stroke-width=".6"/><rect x="1390.0" y="410.7" width="71.0" height="6.6" fill="none" stroke="#d2d2d2" stroke-width=".6"/><path d="M1391.5 412.5H1428.2M1431.2 412.5H1459.5" stroke="#b0b0b0" stroke-width="1.2" stroke-dasharray="4 .7 2.5 .6 5 .8"/><path d="M1402.8 415.6H1425.7M1435.4 415.6H1456.7" stroke="#bcbcbc" stroke-width="1" stroke-dasharray="3 .8 2 .6"/><path d="M1429.7 410.7V417.3" stroke="#d0d0d0" stroke-width=".6"/><path d="M1425.5 407.3V410.7" stroke="#c0c0c0" stroke-width=".6"/><rect x="1393.6" y="420.1" width="64.4" height="6.6" fill="none" stroke="#d2d2d2" stroke-width=".6"/><path d="M1395.1 421.9H1434.8M1437.8 421.9H1456.5" stroke="#b0b0b0" stroke-width="1.2" stroke-dasharray="4 .7 2.5 .6 5 .8"/><path d="M1405.2 425.0H1432.3M1441.5 425.0H1454.1" stroke="#bcbcbc" stroke-width="1" stroke-dasharray="3 .8 2 .6"/><path d="M1436.3 420.1V426.7" stroke="#d0d0d0" stroke-width=".6"/><path d="M1425.8 417.3V420.1" stroke="#c0c0c0" stroke-width=".6"/><rect x="1396.6" y="429.5" width="56.4" height="6.6" fill="none" stroke="#d2d2d2" stroke-width=".6"/><path d="M1398.1 431.3H1431.1M1434.1 431.3H1451.5" stroke="#b0b0b0" stroke-width="1.2" stroke-dasharray="4 .7 2.5 .6 5 .8"/><path d="M1406.8 434.4H1428.6M1437.1 434.4H1449.6" stroke="#bcbcbc" stroke-width="1" stroke-dasharray="3 .8 2 .6"/><path d="M1432.6 429.5V436.1" stroke="#d0d0d0" stroke-width=".6"/><path d="M1424.8 426.7V429.5" stroke="#c0c0c0" stroke-width=".6"/><rect x="1389.6" y="439.1" width="71.4" height="6.6" fill="none" stroke="#d2d2d2" stroke-width=".6"/><path d="M1391.1 440.9H1430.6M1433.6 440.9H1459.5" stroke="#b0b0b0" stroke-width="1.2" stroke-dasharray="4 .7 2.5 .6 5 .8"/><path d="M1402.5 444.0H1428.1M1437.8 444.0H1456.7" stroke="#bcbcbc" stroke-width="1" stroke-dasharray="3 .8 2 .6"/><path d="M1432.1 439.1V445.7" stroke="#d0d0d0" stroke-width=".6"/><path d="M1425.3 436.1V439.1" stroke="#c0c0c0" stroke-width=".6"/><rect x="1393.6" y="448.0" width="56.4" height="6.6" fill="none" stroke="#d2d2d2" stroke-width=".6"/><path d="M1395.1 449.8H1423.4M1426.4 449.8H1448.5" stroke="#b0b0b0" stroke-width="1.2" stroke-dasharray="4 .7 2.5 .6 5 .8"/><path d="M1403.8 452.9H1420.9M1429.4 452.9H1446.6" stroke="#bcbcbc" stroke-width="1" stroke-dasharray="3 .8 2 .6"/><path d="M1424.9 448.0V454.6" stroke="#d0d0d0" stroke-width=".6"/><path d="M1421.8 445.7V448.0" stroke="#c0c0c0" stroke-width=".6"/><rect x="1389.6" y="457.4" width="64.4" height="6.6" fill="none" stroke="#d2d2d2" stroke-width=".6"/><path d="M1391.1 459.2H1431.9M1434.9 459.2H1452.5" stroke="#b0b0b0" stroke-width="1.2" stroke-dasharray="4 .7 2.5 .6 5 .8"/><path d="M1401.2 462.3H1429.4M1438.5 462.3H1450.1" stroke="#bcbcbc" stroke-width="1" stroke-dasharray="3 .8 2 .6"/><path d="M1433.4 457.4V464.0" stroke="#d0d0d0" stroke-width=".6"/><path d="M1421.8 454.6V457.4" stroke="#c0c0c0" stroke-width=".6"/><rect x="1383.7" y="466.7" width="56.3" height="6.6" fill="none" stroke="#d2d2d2" stroke-width=".6"/><path d="M1385.2 468.5H1417.2M1420.2 468.5H1438.5" stroke="#b0b0b0" stroke-width="1.2" stroke-dasharray="4 .7 2.5 .6 5 .8"/><path d="M1393.8 471.6H1414.7M1423.2 471.6H1436.6" stroke="#bcbcbc" stroke-width="1" stroke-dasharray="3 .8 2 .6"/><path d="M1418.7 466.7V473.3" stroke="#d0d0d0" stroke-width=".6"/><path d="M1411.8 464.0V466.7" stroke="#c0c0c0" stroke-width=".6"/><rect x="1360.8" y="475.7" width="68.7" height="6.6" fill="none" stroke="#d2d2d2" stroke-width=".6"/><path d="M1362.3 477.5H1404.5M1407.5 477.5H1428.0" stroke="#b0b0b0" stroke-width="1.2" stroke-dasharray="4 .7 2.5 .6 5 .8"/><path d="M1373.2 480.6H1402.0M1411.5 480.6H1425.4" stroke="#bcbcbc" stroke-width="1" stroke-dasharray="3 .8 2 .6"/><path d="M1406.0 475.7V482.3" stroke="#d0d0d0" stroke-width=".6"/><path d="M1395.2 473.3V475.7" stroke="#c0c0c0" stroke-width=".6"/><rect x="1432.5" y="475.7" width="55.5" height="6.6" fill="none" stroke="#d2d2d2" stroke-width=".6"/><path d="M1434.0 477.5H1468.8M1471.8 477.5H1486.5" stroke="#b0b0b0" stroke-width="1.2" stroke-dasharray="4 .7 2.5 .6 5 .8"/><path d="M1442.5 480.6H1466.3M1474.8 480.6H1484.7" stroke="#bcbcbc" stroke-width="1" stroke-dasharray="3 .8 2 .6"/><path d="M1470.3 475.7V482.3" stroke="#d0d0d0" stroke-width=".6"/><path d="M1460.2 473.3V475.7" stroke="#c0c0c0" stroke-width=".6"/><rect x="1366.7" y="485.7" width="63.8" height="6.6" fill="none" stroke="#d2d2d2" stroke-width=".6"/><path d="M1368.2 487.5H1407.1M1410.1 487.5H1429.0" stroke="#b0b0b0" stroke-width="1.2" stroke-dasharray="4 .7 2.5 .6 5 .8"/><path d="M1378.2 490.6H1404.6M1413.7 490.6H1426.7" stroke="#bcbcbc" stroke-width="1" stroke-dasharray="3 .8 2 .6"/><path d="M1408.6 485.7V492.3" stroke="#d0d0d0" stroke-width=".6"/><path d="M1398.6 482.3V485.7" stroke="#c0c0c0" stroke-width=".6"/><rect x="1383.7" y="495.3" width="51.8" height="6.6" fill="none" stroke="#d2d2d2" stroke-width=".6"/><path d="M1385.2 497.1H1417.8M1420.8 497.1H1434.0" stroke="#b0b0b0" stroke-width="1.2" stroke-dasharray="4 .7 2.5 .6 5 .8"/><path d="M1393.0 500.2H1415.3M1423.5 500.2H1432.4" stroke="#bcbcbc" stroke-width="1" stroke-dasharray="3 .8 2 .6"/><path d="M1419.3 495.3V501.9" stroke="#d0d0d0" stroke-width=".6"/><path d="M1409.6 492.3V495.3" stroke="#c0c0c0" stroke-width=".6"/><rect x="1379.0" y="504.7" width="69.0" height="6.6" fill="none" stroke="#d2d2d2" stroke-width=".6"/><path d="M1380.5 506.5H1419.5M1422.5 506.5H1446.5" stroke="#b0b0b0" stroke-width="1.2" stroke-dasharray="4 .7 2.5 .6 5 .8"/><path d="M1391.4 509.6H1417.0M1426.6 509.6H1443.9" stroke="#bcbcbc" stroke-width="1" stroke-dasharray="3 .8 2 .6"/><path d="M1421.0 504.7V511.3" stroke="#d0d0d0" stroke-width=".6"/><path d="M1413.5 501.9V504.7" stroke="#c0c0c0" stroke-width=".6"/><rect x="1416.0" y="513.7" width="53.0" height="6.6" fill="none" stroke="#d2d2d2" stroke-width=".6"/><path d="M1417.5 515.5H1450.0M1453.0 515.5H1467.5" stroke="#b0b0b0" stroke-width="1.2" stroke-dasharray="4 .7 2.5 .6 5 .8"/><path d="M1425.5 518.6H1447.5M1455.8 518.6H1465.8" stroke="#bcbcbc" stroke-width="1" stroke-dasharray="3 .8 2 .6"/><path d="M1451.5 513.7V520.3" stroke="#d0d0d0" stroke-width=".6"/><path d="M1442.5 511.3V513.7" stroke="#c0c0c0" stroke-width=".6"/><rect x="1411.0" y="523.7" width="63.0" height="6.6" fill="none" stroke="#d2d2d2" stroke-width=".6"/><path d="M1412.5 525.5H1448.4M1451.4 525.5H1472.5" stroke="#b0b0b0" stroke-width="1.2" stroke-dasharray="4 .7 2.5 .6 5 .8"/><path d="M1422.3 528.6H1445.9M1454.9 528.6H1470.2" stroke="#bcbcbc" stroke-width="1" stroke-dasharray="3 .8 2 .6"/><path d="M1449.9 523.7V530.3" stroke="#d0d0d0" stroke-width=".6"/><path d="M1442.5 520.3V523.7" stroke="#c0c0c0" stroke-width=".6"/><rect x="1421.5" y="532.7" width="53.5" height="6.6" fill="none" stroke="#d2d2d2" stroke-width=".6"/><path d="M1423.0 534.5H1456.9M1459.9 534.5H1473.5" stroke="#b0b0b0" stroke-width="1.2" stroke-dasharray="4 .7 2.5 .6 5 .8"/><path d="M1431.1 537.6H1454.4M1462.7 537.6H1471.8" stroke="#bcbcbc" stroke-width="1" stroke-dasharray="3 .8 2 .6"/><path d="M1458.4 532.7V539.3" stroke="#d0d0d0" stroke-width=".6"/><path d="M1448.2 530.3V532.7" stroke="#c0c0c0" stroke-width=".6"/><rect x="1418.0" y="542.7" width="68.0" height="6.6" fill="none" stroke="#d2d2d2" stroke-width=".6"/><path d="M1419.5 544.5H1462.9M1465.9 544.5H1484.5" stroke="#b0b0b0" stroke-width="1.2" stroke-dasharray="4 .7 2.5 .6 5 .8"/><path d="M1430.2 547.6H1460.4M1469.8 547.6H1481.9" stroke="#bcbcbc" stroke-width="1" stroke-dasharray="3 .8 2 .6"/><path d="M1464.4 542.7V549.3" stroke="#d0d0d0" stroke-width=".6"/><path d="M1452.0 539.3V542.7" stroke="#c0c0c0" stroke-width=".6"/><rect x="1420.5" y="551.7" width="62.5" height="6.6" fill="none" stroke="#d2d2d2" stroke-width=".6"/><path d="M1422.0 553.5H1454.3M1457.3 553.5H1481.5" stroke="#b0b0b0" stroke-width="1.2" stroke-dasharray="4 .7 2.5 .6 5 .8"/><path d="M1431.8 556.6H1451.8M1460.8 556.6H1479.2" stroke="#bcbcbc" stroke-width="1" stroke-dasharray="3 .8 2 .6"/><path d="M1455.8 551.7V558.3" stroke="#d0d0d0" stroke-width=".6"/><path d="M1451.8 549.3V551.7" stroke="#c0c0c0" stroke-width=".6"/><rect x="1424.5" y="560.7" width="55.5" height="6.6" fill="none" stroke="#d2d2d2" stroke-width=".6"/><path d="M1426.0 562.5H1454.7M1457.7 562.5H1478.5" stroke="#b0b0b0" stroke-width="1.2" stroke-dasharray="4 .7 2.5 .6 5 .8"/><path d="M1434.5 565.6H1452.2M1460.6 565.6H1476.7" stroke="#bcbcbc" stroke-width="1" stroke-dasharray="3 .8 2 .6"/><path d="M1456.2 560.7V567.3" stroke="#d0d0d0" stroke-width=".6"/><path d="M1452.2 558.3V560.7" stroke="#c0c0c0" stroke-width=".6"/><rect x="1419.0" y="570.7" width="67.0" height="6.6" fill="none" stroke="#d2d2d2" stroke-width=".6"/><path d="M1420.5 572.5H1456.5M1459.5 572.5H1484.5" stroke="#b0b0b0" stroke-width="1.2" stroke-dasharray="4 .7 2.5 .6 5 .8"/><path d="M1431.1 575.6H1454.0M1463.4 575.6H1482.0" stroke="#bcbcbc" stroke-width="1" stroke-dasharray="3 .8 2 .6"/><path d="M1458.0 570.7V577.3" stroke="#d0d0d0" stroke-width=".6"/><path d="M1452.5 567.3V570.7" stroke="#c0c0c0" stroke-width=".6"/><rect x="1407.6" y="579.7" width="51.4" height="6.6" fill="none" stroke="#d2d2d2" stroke-width=".6"/><path d="M1409.1 581.5H1441.8M1444.8 581.5H1457.5" stroke="#b0b0b0" stroke-width="1.2" stroke-dasharray="4 .7 2.5 .6 5 .8"/><path d="M1416.9 584.6H1439.3M1447.4 584.6H1455.9" stroke="#bcbcbc" stroke-width="1" stroke-dasharray="3 .8 2 .6"/><path d="M1443.3 579.7V586.3" stroke="#d0d0d0" stroke-width=".6"/><path d="M1433.3 577.3V579.7" stroke="#c0c0c0" stroke-width=".6"/><rect x="1401.6" y="589.3" width="63.4" height="6.6" fill="none" stroke="#d2d2d2" stroke-width=".6"/><path d="M1403.1 591.1H1439.1M1442.1 591.1H1463.5" stroke="#b0b0b0" stroke-width="1.2" stroke-dasharray="4 .7 2.5 .6 5 .8"/><path d="M1413.0 594.2H1436.6M1445.7 594.2H1461.2" stroke="#bcbcbc" stroke-width="1" stroke-dasharray="3 .8 2 .6"/><path d="M1440.6 589.3V595.9" stroke="#d0d0d0" stroke-width=".6"/><path d="M1433.3 586.3V589.3" stroke="#c0c0c0" stroke-width=".6"/><rect x="1393.6" y="598.7" width="56.4" height="6.6" fill="none" stroke="#d2d2d2" stroke-width=".6"/><path d="M1395.1 600.5H1428.4M1431.4 600.5H1448.5" stroke="#b0b0b0" stroke-width="1.2" stroke-dasharray="4 .7 2.5 .6 5 .8"/><path d="M1403.8 603.6H1425.9M1434.4 603.6H1446.6" stroke="#bcbcbc" stroke-width="1" stroke-dasharray="3 .8 2 .6"/><path d="M1429.9 598.7V605.3" stroke="#d0d0d0" stroke-width=".6"/><path d="M1421.8 595.9V598.7" stroke="#c0c0c0" stroke-width=".6"/><rect x="1374.7" y="608.2" width="70.3" height="6.6" fill="none" stroke="#d2d2d2" stroke-width=".6"/><path d="M1376.2 610.0H1415.0M1418.0 610.0H1443.5" stroke="#b0b0b0" stroke-width="1.2" stroke-dasharray="4 .7 2.5 .6 5 .8"/><path d="M1387.4 613.1H1412.5M1422.2 613.1H1440.8" stroke="#bcbcbc" stroke-width="1" stroke-dasharray="3 .8 2 .6"/><path d="M1416.5 608.2V614.8" stroke="#d0d0d0" stroke-width=".6"/><path d="M1409.8 605.3V608.2" stroke="#c0c0c0" stroke-width=".6"/><rect x="1447.0" y="608.2" width="57.0" height="6.6" fill="none" stroke="#d2d2d2" stroke-width=".6"/><path d="M1448.5 610.0H1481.2M1484.2 610.0H1502.5" stroke="#b0b0b0" stroke-width="1.2" stroke-dasharray="4 .7 2.5 .6 5 .8"/><path d="M1457.3 613.1H1478.7M1487.2 613.1H1500.6" stroke="#bcbcbc" stroke-width="1" stroke-dasharray="3 .8 2 .6"/><path d="M1482.7 608.2V614.8" stroke="#d0d0d0" stroke-width=".6"/><path d="M1475.5 605.3V608.2" stroke="#c0c0c0" stroke-width=".6"/><rect x="1386.7" y="617.2" width="62.3" height="6.6" fill="none" stroke="#d2d2d2" stroke-width=".6"/><path d="M1388.2 619.0H1423.1M1426.1 619.0H1447.5" stroke="#b0b0b0" stroke-width="1.2" stroke-dasharray="4 .7 2.5 .6 5 .8"/><path d="M1397.9 622.1H1420.6M1429.6 622.1H1445.3" stroke="#bcbcbc" stroke-width="1" stroke-dasharray="3 .8 2 .6"/><path d="M1424.6 617.2V623.8" stroke="#d0d0d0" stroke-width=".6"/><path d="M1417.8 614.8V617.2" stroke="#c0c0c0" stroke-width=".6"/><rect x="1399.0" y="627.2" width="57.0" height="6.6" fill="none" stroke="#d2d2d2" stroke-width=".6"/><path d="M1400.5 629.0H1431.9M1434.9 629.0H1454.5" stroke="#b0b0b0" stroke-width="1.2" stroke-dasharray="4 .7 2.5 .6 5 .8"/><path d="M1409.3 632.1H1429.4M1437.9 632.1H1452.6" stroke="#bcbcbc" stroke-width="1" stroke-dasharray="3 .8 2 .6"/><path d="M1433.4 627.2V633.8" stroke="#d0d0d0" stroke-width=".6"/><path d="M1427.5 623.8V627.2" stroke="#c0c0c0" stroke-width=".6"/><rect x="1396.6" y="636.1" width="71.4" height="6.6" fill="none" stroke="#d2d2d2" stroke-width=".6"/><path d="M1398.1 637.9H1440.6M1443.6 637.9H1466.5" stroke="#b0b0b0" stroke-width="1.2" stroke-dasharray="4 .7 2.5 .6 5 .8"/><path d="M1409.5 641.0H1438.1M1447.8 641.0H1463.7" stroke="#bcbcbc" stroke-width="1" stroke-dasharray="3 .8 2 .6"/><path d="M1442.1 636.1V642.7" stroke="#d0d0d0" stroke-width=".6"/><path d="M1432.3 633.8V636.1" stroke="#c0c0c0" stroke-width=".6"/><rect x="1407.6" y="645.5" width="54.4" height="6.6" fill="none" stroke="#d2d2d2" stroke-width=".6"/><path d="M1409.1 647.3H1440.8M1443.8 647.3H1460.5" stroke="#b0b0b0" stroke-width="1.2" stroke-dasharray="4 .7 2.5 .6 5 .8"/><path d="M1417.4 650.4H1438.3M1446.6 650.4H1458.7" stroke="#bcbcbc" stroke-width="1" stroke-dasharray="3 .8 2 .6"/><path d="M1442.3 645.5V652.1" stroke="#d0d0d0" stroke-width=".6"/><path d="M1434.8 642.7V645.5" stroke="#c0c0c0" stroke-width=".6"/><rect x="1401.6" y="654.7" width="66.4" height="6.6" fill="none" stroke="#d2d2d2" stroke-width=".6"/><path d="M1403.1 656.5H1445.6M1448.6 656.5H1466.5" stroke="#b0b0b0" stroke-width="1.2" stroke-dasharray="4 .7 2.5 .6 5 .8"/><path d="M1413.6 659.6H1443.1M1452.4 659.6H1464.0" stroke="#bcbcbc" stroke-width="1" stroke-dasharray="3 .8 2 .6"/><path d="M1447.1 654.7V661.3" stroke="#d0d0d0" stroke-width=".6"/><path d="M1434.8 652.1V654.7" stroke="#c0c0c0" stroke-width=".6"/><rect x="1436.5" y="664.7" width="56.5" height="6.6" fill="none" stroke="#d2d2d2" stroke-width=".6"/><path d="M1438.0 666.5H1471.9M1474.9 666.5H1491.5" stroke="#b0b0b0" stroke-width="1.2" stroke-dasharray="4 .7 2.5 .6 5 .8"/><path d="M1446.7 669.6H1469.4M1477.9 669.6H1489.6" stroke="#bcbcbc" stroke-width="1" stroke-dasharray="3 .8 2 .6"/><path d="M1473.4 664.7V671.3" stroke="#d0d0d0" stroke-width=".6"/><path d="M1464.8 661.3V664.7" stroke="#c0c0c0" stroke-width=".6"/><rect x="1432.5" y="673.7" width="72.5" height="6.6" fill="none" stroke="#d2d2d2" stroke-width=".6"/><path d="M1434.0 675.5H1481.0M1484.0 675.5H1503.5" stroke="#b0b0b0" stroke-width="1.2" stroke-dasharray="4 .7 2.5 .6 5 .8"/><path d="M1445.5 678.6H1478.5M1488.3 678.6H1500.7" stroke="#bcbcbc" stroke-width="1" stroke-dasharray="3 .8 2 .6"/><path d="M1482.5 673.7V680.3" stroke="#d0d0d0" stroke-width=".6"/><path d="M1468.8 671.3V673.7" stroke="#c0c0c0" stroke-width=".6"/><rect x="1436.5" y="683.7" width="65.5" height="6.6" fill="none" stroke="#d2d2d2" stroke-width=".6"/><path d="M1438.0 685.5H1479.4M1482.4 685.5H1500.5" stroke="#b0b0b0" stroke-width="1.2" stroke-dasharray="4 .7 2.5 .6 5 .8"/><path d="M1448.3 688.6H1476.9M1486.2 688.6H1498.1" stroke="#bcbcbc" stroke-width="1" stroke-dasharray="3 .8 2 .6"/><path d="M1480.9 683.7V690.3" stroke="#d0d0d0" stroke-width=".6"/><path d="M1469.2 680.3V683.7" stroke="#c0c0c0" stroke-width=".6"/><rect x="1440.4" y="693.3" width="56.6" height="6.6" fill="none" stroke="#d2d2d2" stroke-width=".6"/><path d="M1441.9 695.1H1478.4M1481.4 695.1H1495.5" stroke="#b0b0b0" stroke-width="1.2" stroke-dasharray="4 .7 2.5 .6 5 .8"/><path d="M1450.6 698.2H1475.9M1484.5 698.2H1493.6" stroke="#bcbcbc" stroke-width="1" stroke-dasharray="3 .8 2 .6"/><path d="M1479.9 693.3V699.9" stroke="#d0d0d0" stroke-width=".6"/><path d="M1468.7 690.3V693.3" stroke="#c0c0c0" stroke-width=".6"/><rect x="1433.0" y="702.7" width="72.0" height="6.6" fill="none" stroke="#d2d2d2" stroke-width=".6"/><path d="M1434.5 704.5H1478.3M1481.3 704.5H1503.5" stroke="#b0b0b0" stroke-width="1.2" stroke-dasharray="4 .7 2.5 .6 5 .8"/><path d="M1446.0 707.6H1475.8M1485.6 707.6H1500.7" stroke="#bcbcbc" stroke-width="1" stroke-dasharray="3 .8 2 .6"/><path d="M1479.8 702.7V709.3" stroke="#d0d0d0" stroke-width=".6"/><path d="M1469.0 699.9V702.7" stroke="#c0c0c0" stroke-width=".6"/><rect x="1442.0" y="710.7" width="55.0" height="6.6" fill="none" stroke="#d2d2d2" stroke-width=".6"/><path d="M1443.5 712.5H1472.1M1475.1 712.5H1495.5" stroke="#b0b0b0" stroke-width="1.2" stroke-dasharray="4 .7 2.5 .6 5 .8"/><path d="M1451.9 715.6H1469.6M1478.0 715.6H1493.7" stroke="#bcbcbc" stroke-width="1" stroke-dasharray="3 .8 2 .6"/><path d="M1473.6 710.7V717.3" stroke="#d0d0d0" stroke-width=".6"/><path d="M1469.5 709.3V710.7" stroke="#c0c0c0" stroke-width=".6"/><rect x="1456.0" y="719.7" width="41.5" height="6.6" fill="none" stroke="#d2d2d2" stroke-width=".6"/><path d="M1457.5 721.5H1482.7M1485.7 721.5H1496.0" stroke="#b0b0b0" stroke-width="1.2" stroke-dasharray="4 .7 2.5 .6 5 .8"/><path d="M1463.5 724.6H1480.2M1487.5 724.6H1495.0" stroke="#bcbcbc" stroke-width="1" stroke-dasharray="3 .8 2 .6"/><path d="M1484.2 719.7V726.3" stroke="#d0d0d0" stroke-width=".6"/><path d="M1476.8 717.3V719.7" stroke="#c0c0c0" stroke-width=".6"/><rect x="1461.7" y="729.7" width="60.8" height="6.6" fill="none" stroke="#d2d2d2" stroke-width=".6"/><path d="M1463.2 731.5H1502.4M1505.4 731.5H1521.0" stroke="#b0b0b0" stroke-width="1.2" stroke-dasharray="4 .7 2.5 .6 5 .8"/><path d="M1472.6 734.6H1499.9M1508.8 734.6H1518.9" stroke="#bcbcbc" stroke-width="1" stroke-dasharray="3 .8 2 .6"/><path d="M1503.9 729.7V736.3" stroke="#d0d0d0" stroke-width=".6"/><path d="M1492.1 726.3V729.7" stroke="#c0c0c0" stroke-width=".6"/><rect x="1453.0" y="739.2" width="78.0" height="6.6" fill="none" stroke="#d2d2d2" stroke-width=".6"/><path d="M1454.5 741.0H1505.0M1508.0 741.0H1529.5" stroke="#b0b0b0" stroke-width="1.2" stroke-dasharray="4 .7 2.5 .6 5 .8"/><path d="M1467.0 744.1H1502.5M1512.7 744.1H1526.3" stroke="#bcbcbc" stroke-width="1" stroke-dasharray="3 .8 2 .6"/><path d="M1506.5 739.2V745.8" stroke="#d0d0d0" stroke-width=".6"/><path d="M1492.0 736.3V739.2" stroke="#c0c0c0" stroke-width=".6"/><rect x="1534.0" y="739.2" width="76.0" height="6.6" fill="none" stroke="#d2d2d2" stroke-width=".6"/><path d="M1535.5 741.0H1580.8M1583.8 741.0H1608.5" stroke="#b0b0b0" stroke-width="1.2" stroke-dasharray="4 .7 2.5 .6 5 .8"/><path d="M1547.7 744.1H1578.3M1588.4 744.1H1605.4" stroke="#bcbcbc" stroke-width="1" stroke-dasharray="3 .8 2 .6"/><path d="M1582.3 739.2V745.8" stroke="#d0d0d0" stroke-width=".6"/><path d="M1572.0 736.3V739.2" stroke="#c0c0c0" stroke-width=".6"/><rect x="1461.0" y="748.4" width="62.0" height="6.6" fill="none" stroke="#d2d2d2" stroke-width=".6"/><path d="M1462.5 750.2H1500.2M1503.2 750.2H1521.5" stroke="#b0b0b0" stroke-width="1.2" stroke-dasharray="4 .7 2.5 .6 5 .8"/><path d="M1472.2 753.3H1497.7M1506.7 753.3H1519.3" stroke="#bcbcbc" stroke-width="1" stroke-dasharray="3 .8 2 .6"/><path d="M1501.7 748.4V755.0" stroke="#d0d0d0" stroke-width=".6"/><path d="M1492.0 745.8V748.4" stroke="#c0c0c0" stroke-width=".6"/><rect x="1541.0" y="748.4" width="63.0" height="6.6" fill="none" stroke="#d2d2d2" stroke-width=".6"/><path d="M1542.5 750.2H1576.1M1579.1 750.2H1602.5" stroke="#b0b0b0" stroke-width="1.2" stroke-dasharray="4 .7 2.5 .6 5 .8"/><path d="M1552.3 753.3H1573.6M1582.7 753.3H1600.2" stroke="#bcbcbc" stroke-width="1" stroke-dasharray="3 .8 2 .6"/><path d="M1577.6 748.4V755.0" stroke="#d0d0d0" stroke-width=".6"/><path d="M1572.5 745.8V748.4" stroke="#c0c0c0" stroke-width=".6"/><rect x="1453.0" y="759.2" width="79.0" height="6.6" fill="none" stroke="#d2d2d2" stroke-width=".6"/><path d="M1454.5 761.0H1504.8M1507.8 761.0H1530.5" stroke="#b0b0b0" stroke-width="1.2" stroke-dasharray="4 .7 2.5 .6 5 .8"/><path d="M1467.2 764.1H1502.3M1512.6 764.1H1527.3" stroke="#bcbcbc" stroke-width="1" stroke-dasharray="3 .8 2 .6"/><path d="M1506.3 759.2V765.8" stroke="#d0d0d0" stroke-width=".6"/><path d="M1492.5 755.0V759.2" stroke="#c0c0c0" stroke-width=".6"/><rect x="1534.0" y="759.2" width="78.0" height="6.6" fill="none" stroke="#d2d2d2" stroke-width=".6"/><path d="M1535.5 761.0H1582.1M1585.1 761.0H1610.5" stroke="#b0b0b0" stroke-width="1.2" stroke-dasharray="4 .7 2.5 .6 5 .8"/><path d="M1548.0 764.1H1579.6M1589.9 764.1H1607.3" stroke="#bcbcbc" stroke-width="1" stroke-dasharray="3 .8 2 .6"/><path d="M1583.6 759.2V765.8" stroke="#d0d0d0" stroke-width=".6"/><path d="M1573.0 755.0V759.2" stroke="#c0c0c0" stroke-width=".6"/><rect x="1469.0" y="768.4" width="47.0" height="6.6" fill="none" stroke="#d2d2d2" stroke-width=".6"/><path d="M1470.5 770.2H1495.4M1498.4 770.2H1514.5" stroke="#b0b0b0" stroke-width="1.2" stroke-dasharray="4 .7 2.5 .6 5 .8"/><path d="M1477.5 773.3H1492.9M1500.6 773.3H1513.2" stroke="#bcbcbc" stroke-width="1" stroke-dasharray="3 .8 2 .6"/><path d="M1496.9 768.4V775.0" stroke="#d0d0d0" stroke-width=".6"/><path d="M1492.5 765.8V768.4" stroke="#c0c0c0" stroke-width=".6"/><rect x="1549.0" y="768.4" width="47.0" height="6.6" fill="none" stroke="#d2d2d2" stroke-width=".6"/><path d="M1550.5 770.2H1573.8M1576.8 770.2H1594.5" stroke="#b0b0b0" stroke-width="1.2" stroke-dasharray="4 .7 2.5 .6 5 .8"/><path d="M1557.5 773.3H1571.3M1579.1 773.3H1593.2" stroke="#bcbcbc" stroke-width="1" stroke-dasharray="3 .8 2 .6"/><path d="M1575.3 768.4V775.0" stroke="#d0d0d0" stroke-width=".6"/><path d="M1572.5 765.8V768.4" stroke="#c0c0c0" stroke-width=".6"/><rect x="1461.0" y="777.7" width="46.5" height="6.6" fill="none" stroke="#d2d2d2" stroke-width=".6"/><path d="M1462.5 779.5H1491.0M1494.0 779.5H1506.0" stroke="#b0b0b0" stroke-width="1.2" stroke-dasharray="4 .7 2.5 .6 5 .8"/><path d="M1469.4 782.6H1488.5M1496.3 782.6H1504.7" stroke="#bcbcbc" stroke-width="1" stroke-dasharray="3 .8 2 .6"/><path d="M1492.5 777.7V784.3" stroke="#d0d0d0" stroke-width=".6"/><path d="M1484.2 775.0V777.7" stroke="#c0c0c0" stroke-width=".6"/><rect x="1549.0" y="777.7" width="47.0" height="6.6" fill="none" stroke="#d2d2d2" stroke-width=".6"/><path d="M1550.5 779.5H1580.3M1583.3 779.5H1594.5" stroke="#b0b0b0" stroke-width="1.2" stroke-dasharray="4 .7 2.5 .6 5 .8"/><path d="M1557.5 782.6H1577.8M1585.6 782.6H1593.2" stroke="#bcbcbc" stroke-width="1" stroke-dasharray="3 .8 2 .6"/><path d="M1581.8 777.7V784.3" stroke="#d0d0d0" stroke-width=".6"/><path d="M1572.5 775.0V777.7" stroke="#c0c0c0" stroke-width=".6"/><rect x="1396.0" y="786.7" width="85.0" height="6.6" fill="none" stroke="#d2d2d2" stroke-width=".6"/><path d="M1397.5 788.5H1442.4M1445.4 788.5H1479.5" stroke="#b0b0b0" stroke-width="1.2" stroke-dasharray="4 .7 2.5 .6 5 .8"/><path d="M1411.3 791.6H1439.9M1450.7 791.6H1475.9" stroke="#bcbcbc" stroke-width="1" stroke-dasharray="3 .8 2 .6"/><path d="M1443.9 786.7V793.3" stroke="#d0d0d0" stroke-width=".6"/><path d="M1438.5 784.3V786.7" stroke="#c0c0c0" stroke-width=".6"/><rect x="1531.0" y="786.7" width="85.0" height="6.6" fill="none" stroke="#d2d2d2" stroke-width=".6"/><path d="M1532.5 788.5H1586.5M1589.5 788.5H1614.5" stroke="#b0b0b0" stroke-width="1.2" stroke-dasharray="4 .7 2.5 .6 5 .8"/><path d="M1546.3 791.6H1584.0M1594.8 791.6H1610.9" stroke="#bcbcbc" stroke-width="1" stroke-dasharray="3 .8 2 .6"/><path d="M1588.0 786.7V793.3" stroke="#d0d0d0" stroke-width=".6"/><path d="M1573.5 784.3V786.7" stroke="#c0c0c0" stroke-width=".6"/><rect x="1316.7" y="796.4" width="60.8" height="6.6" fill="none" stroke="#d2d2d2" stroke-width=".6"/><path d="M1318.2 798.2H1352.4M1355.4 798.2H1376.0" stroke="#b0b0b0" stroke-width="1.2" stroke-dasharray="4 .7 2.5 .6 5 .8"/><path d="M1327.6 801.3H1349.9M1358.7 801.3H1373.9" stroke="#bcbcbc" stroke-width="1" stroke-dasharray="3 .8 2 .6"/><path d="M1353.9 796.4V803.0" stroke="#d0d0d0" stroke-width=".6"/><path d="M1347.1 793.3V796.4" stroke="#c0c0c0" stroke-width=".6"/><rect x="1400.0" y="796.4" width="74.0" height="6.6" fill="none" stroke="#d2d2d2" stroke-width=".6"/><path d="M1401.5 798.2H1440.9M1443.9 798.2H1472.5" stroke="#b0b0b0" stroke-width="1.2" stroke-dasharray="4 .7 2.5 .6 5 .8"/><path d="M1413.3 801.3H1438.4M1448.3 801.3H1469.6" stroke="#bcbcbc" stroke-width="1" stroke-dasharray="3 .8 2 .6"/><path d="M1442.4 796.4V803.0" stroke="#d0d0d0" stroke-width=".6"/><path d="M1437.0 793.3V796.4" stroke="#c0c0c0" stroke-width=".6"/><rect x="1549.0" y="796.4" width="59.0" height="6.6" fill="none" stroke="#d2d2d2" stroke-width=".6"/><path d="M1550.5 798.2H1582.6M1585.6 798.2H1606.5" stroke="#b0b0b0" stroke-width="1.2" stroke-dasharray="4 .7 2.5 .6 5 .8"/><path d="M1559.6 801.3H1580.1M1588.8 801.3H1604.5" stroke="#bcbcbc" stroke-width="1" stroke-dasharray="3 .8 2 .6"/><path d="M1584.1 796.4V803.0" stroke="#d0d0d0" stroke-width=".6"/><path d="M1578.5 793.3V796.4" stroke="#c0c0c0" stroke-width=".6"/><rect x="1650.0" y="796.4" width="73.0" height="6.6" fill="none" stroke="#d2d2d2" stroke-width=".6"/><path d="M1651.5 798.2H1697.1M1700.1 798.2H1721.5" stroke="#b0b0b0" stroke-width="1.2" stroke-dasharray="4 .7 2.5 .6 5 .8"/><path d="M1663.1 801.3H1694.6M1704.4 801.3H1718.6" stroke="#bcbcbc" stroke-width="1" stroke-dasharray="3 .8 2 .6"/><path d="M1698.6 796.4V803.0" stroke="#d0d0d0" stroke-width=".6"/><path d="M1686.5 793.3V796.4" stroke="#c0c0c0" stroke-width=".6"/><rect x="1296.0" y="805.4" width="60.7" height="6.6" fill="none" stroke="#d2d2d2" stroke-width=".6"/><path d="M1297.5 807.2H1335.8M1338.8 807.2H1355.2" stroke="#b0b0b0" stroke-width="1.2" stroke-dasharray="4 .7 2.5 .6 5 .8"/><path d="M1306.9 810.3H1333.3M1342.2 810.3H1353.1" stroke="#bcbcbc" stroke-width="1" stroke-dasharray="3 .8 2 .6"/><path d="M1337.3 805.4V812.0" stroke="#d0d0d0" stroke-width=".6"/><path d="M1326.3 803.0V805.4" stroke="#c0c0c0" stroke-width=".6"/><rect x="1400.0" y="805.4" width="74.0" height="6.6" fill="none" stroke="#d2d2d2" stroke-width=".6"/><path d="M1401.5 807.2H1439.7M1442.7 807.2H1472.5" stroke="#b0b0b0" stroke-width="1.2" stroke-dasharray="4 .7 2.5 .6 5 .8"/><path d="M1413.3 810.3H1437.2M1447.1 810.3H1469.6" stroke="#bcbcbc" stroke-width="1" stroke-dasharray="3 .8 2 .6"/><path d="M1441.2 805.4V812.0" stroke="#d0d0d0" stroke-width=".6"/><path d="M1437.0 803.0V805.4" stroke="#c0c0c0" stroke-width=".6"/><rect x="1550.0" y="805.4" width="60.0" height="6.6" fill="none" stroke="#d2d2d2" stroke-width=".6"/><path d="M1551.5 807.2H1587.0M1590.0 807.2H1608.5" stroke="#b0b0b0" stroke-width="1.2" stroke-dasharray="4 .7 2.5 .6 5 .8"/><path d="M1560.8 810.3H1584.5M1593.3 810.3H1606.4" stroke="#bcbcbc" stroke-width="1" stroke-dasharray="3 .8 2 .6"/><path d="M1588.5 805.4V812.0" stroke="#d0d0d0" stroke-width=".6"/><path d="M1580.0 803.0V805.4" stroke="#c0c0c0" stroke-width=".6"/><rect x="1690.0" y="805.4" width="72.0" height="6.6" fill="none" stroke="#d2d2d2" stroke-width=".6"/><path d="M1691.5 807.2H1728.6M1731.6 807.2H1760.5" stroke="#b0b0b0" stroke-width="1.2" stroke-dasharray="4 .7 2.5 .6 5 .8"/><path d="M1703.0 810.3H1726.1M1735.8 810.3H1757.7" stroke="#bcbcbc" stroke-width="1" stroke-dasharray="3 .8 2 .6"/><path d="M1730.1 805.4V812.0" stroke="#d0d0d0" stroke-width=".6"/><path d="M1726.0 803.0V805.4" stroke="#c0c0c0" stroke-width=".6"/><rect x="1246.0" y="814.2" width="75.0" height="6.6" fill="none" stroke="#d2d2d2" stroke-width=".6"/><path d="M1247.5 816.0H1293.8M1296.8 816.0H1319.5" stroke="#b0b0b0" stroke-width="1.2" stroke-dasharray="4 .7 2.5 .6 5 .8"/><path d="M1259.5 819.1H1291.3M1301.3 819.1H1316.5" stroke="#bcbcbc" stroke-width="1" stroke-dasharray="3 .8 2 .6"/><path d="M1295.3 814.2V820.8" stroke="#d0d0d0" stroke-width=".6"/><path d="M1283.5 812.0V814.2" stroke="#c0c0c0" stroke-width=".6"/><rect x="1395.0" y="814.2" width="86.0" height="6.6" fill="none" stroke="#d2d2d2" stroke-width=".6"/><path d="M1396.5 816.0H1445.1M1448.1 816.0H1479.5" stroke="#b0b0b0" stroke-width="1.2" stroke-dasharray="4 .7 2.5 .6 5 .8"/><path d="M1410.5 819.1H1442.6M1453.4 819.1H1475.8" stroke="#bcbcbc" stroke-width="1" stroke-dasharray="3 .8 2 .6"/><path d="M1446.6 814.2V820.8" stroke="#d0d0d0" stroke-width=".6"/><path d="M1438.0 812.0V814.2" stroke="#c0c0c0" stroke-width=".6"/><rect x="1546.0" y="814.2" width="74.0" height="6.6" fill="none" stroke="#d2d2d2" stroke-width=".6"/><path d="M1547.5 816.0H1595.0M1598.0 816.0H1618.5" stroke="#b0b0b0" stroke-width="1.2" stroke-dasharray="4 .7 2.5 .6 5 .8"/><path d="M1559.3 819.1H1592.5M1602.4 819.1H1615.6" stroke="#bcbcbc" stroke-width="1" stroke-dasharray="3 .8 2 .6"/><path d="M1596.5 814.2V820.8" stroke="#d0d0d0" stroke-width=".6"/><path d="M1583.0 812.0V814.2" stroke="#c0c0c0" stroke-width=".6"/><rect x="1721.0" y="814.2" width="86.5" height="6.6" fill="none" stroke="#d2d2d2" stroke-width=".6"/><path d="M1722.5 816.0H1779.8M1782.8 816.0H1806.0" stroke="#b0b0b0" stroke-width="1.2" stroke-dasharray="4 .7 2.5 .6 5 .8"/><path d="M1736.6 819.1H1777.3M1788.2 819.1H1802.3" stroke="#bcbcbc" stroke-width="1" stroke-dasharray="3 .8 2 .6"/><path d="M1781.3 814.2V820.8" stroke="#d0d0d0" stroke-width=".6"/><path d="M1764.2 812.0V814.2" stroke="#c0c0c0" stroke-width=".6"/><rect x="1184.8" y="823.7" width="67.8" height="6.6" fill="none" stroke="#d2d2d2" stroke-width=".6"/><path d="M1186.3 825.5H1225.7M1228.7 825.5H1251.1" stroke="#b0b0b0" stroke-width="1.2" stroke-dasharray="4 .7 2.5 .6 5 .8"/><path d="M1197.0 828.6H1223.2M1232.7 828.6H1248.5" stroke="#bcbcbc" stroke-width="1" stroke-dasharray="3 .8 2 .6"/><path d="M1227.2 823.7V830.3" stroke="#d0d0d0" stroke-width=".6"/><path d="M1218.7 820.8V823.7" stroke="#c0c0c0" stroke-width=".6"/><rect x="1396.7" y="823.7" width="80.8" height="6.6" fill="none" stroke="#d2d2d2" stroke-width=".6"/><path d="M1398.2 825.5H1451.7M1454.7 825.5H1476.0" stroke="#b0b0b0" stroke-width="1.2" stroke-dasharray="4 .7 2.5 .6 5 .8"/><path d="M1411.2 828.6H1449.2M1459.7 828.6H1472.7" stroke="#bcbcbc" stroke-width="1" stroke-dasharray="3 .8 2 .6"/><path d="M1453.2 823.7V830.3" stroke="#d0d0d0" stroke-width=".6"/><path d="M1437.1 820.8V823.7" stroke="#c0c0c0" stroke-width=".6"/><rect x="1549.0" y="823.7" width="67.7" height="6.6" fill="none" stroke="#d2d2d2" stroke-width=".6"/><path d="M1550.5 825.5H1587.9M1590.9 825.5H1615.2" stroke="#b0b0b0" stroke-width="1.2" stroke-dasharray="4 .7 2.5 .6 5 .8"/><path d="M1561.2 828.6H1585.4M1594.8 828.6H1612.6" stroke="#bcbcbc" stroke-width="1" stroke-dasharray="3 .8 2 .6"/><path d="M1589.4 823.7V830.3" stroke="#d0d0d0" stroke-width=".6"/><path d="M1582.8 820.8V823.7" stroke="#c0c0c0" stroke-width=".6"/><rect x="1761.0" y="823.7" width="81.0" height="6.6" fill="none" stroke="#d2d2d2" stroke-width=".6"/><path d="M1762.5 825.5H1805.0M1808.0 825.5H1840.5" stroke="#b0b0b0" stroke-width="1.2" stroke-dasharray="4 .7 2.5 .6 5 .8"/><path d="M1775.6 828.6H1802.5M1813.0 828.6H1837.1" stroke="#bcbcbc" stroke-width="1" stroke-dasharray="3 .8 2 .6"/><path d="M1806.5 823.7V830.3" stroke="#d0d0d0" stroke-width=".6"/><path d="M1801.5 820.8V823.7" stroke="#c0c0c0" stroke-width=".6"/><rect x="1037.5" y="833.4" width="70.5" height="6.6" fill="none" stroke="#d2d2d2" stroke-width=".6"/><path d="M1039.0 835.2H1081.1M1084.1 835.2H1106.5" stroke="#b0b0b0" stroke-width="1.2" stroke-dasharray="4 .7 2.5 .6 5 .8"/><path d="M1050.2 838.3H1078.6M1088.3 838.3H1103.8" stroke="#bcbcbc" stroke-width="1" stroke-dasharray="3 .8 2 .6"/><path d="M1082.6 833.4V840.0" stroke="#d0d0d0" stroke-width=".6"/><path d="M1072.8 830.3V833.4" stroke="#c0c0c0" stroke-width=".6"/><rect x="1109.6" y="833.4" width="70.4" height="6.6" fill="none" stroke="#d2d2d2" stroke-width=".6"/><path d="M1111.1 835.2H1147.2M1150.2 835.2H1178.5" stroke="#b0b0b0" stroke-width="1.2" stroke-dasharray="4 .7 2.5 .6 5 .8"/><path d="M1122.3 838.3H1144.7M1154.3 838.3H1175.8" stroke="#bcbcbc" stroke-width="1" stroke-dasharray="3 .8 2 .6"/><path d="M1148.7 833.4V840.0" stroke="#d0d0d0" stroke-width=".6"/><path d="M1144.8 830.3V833.4" stroke="#c0c0c0" stroke-width=".6"/><rect x="1183.0" y="833.4" width="70.0" height="6.6" fill="none" stroke="#d2d2d2" stroke-width=".6"/><path d="M1184.5 835.2H1222.1M1225.1 835.2H1251.5" stroke="#b0b0b0" stroke-width="1.2" stroke-dasharray="4 .7 2.5 .6 5 .8"/><path d="M1195.6 838.3H1219.6M1229.2 838.3H1248.8" stroke="#bcbcbc" stroke-width="1" stroke-dasharray="3 .8 2 .6"/><path d="M1223.6 833.4V840.0" stroke="#d0d0d0" stroke-width=".6"/><path d="M1218.0 830.3V833.4" stroke="#c0c0c0" stroke-width=".6"/><rect x="1255.5" y="833.4" width="71.2" height="6.6" fill="none" stroke="#d2d2d2" stroke-width=".6"/><path d="M1257.0 835.2H1297.5M1300.5 835.2H1325.2" stroke="#b0b0b0" stroke-width="1.2" stroke-dasharray="4 .7 2.5 .6 5 .8"/><path d="M1268.3 838.3H1295.0M1304.7 838.3H1322.4" stroke="#bcbcbc" stroke-width="1" stroke-dasharray="3 .8 2 .6"/><path d="M1299.0 833.4V840.0" stroke="#d0d0d0" stroke-width=".6"/><path d="M1291.1 830.3V833.4" stroke="#c0c0c0" stroke-width=".6"/><rect x="1328.0" y="833.4" width="71.0" height="6.6" fill="none" stroke="#d2d2d2" stroke-width=".6"/><path d="M1329.5 835.2H1372.1M1375.1 835.2H1397.5" stroke="#b0b0b0" stroke-width="1.2" stroke-dasharray="4 .7 2.5 .6 5 .8"/><path d="M1340.8 838.3H1369.6M1379.2 838.3H1394.7" stroke="#bcbcbc" stroke-width="1" stroke-dasharray="3 .8 2 .6"/><path d="M1373.6 833.4V840.0" stroke="#d0d0d0" stroke-width=".6"/><path d="M1363.5 830.3V833.4" stroke="#c0c0c0" stroke-width=".6"/><rect x="1401.7" y="833.4" width="70.8" height="6.6" fill="none" stroke="#d2d2d2" stroke-width=".6"/><path d="M1403.2 835.2H1440.8M1443.8 835.2H1471.0" stroke="#b0b0b0" stroke-width="1.2" stroke-dasharray="4 .7 2.5 .6 5 .8"/><path d="M1414.4 838.3H1438.3M1448.0 838.3H1468.3" stroke="#bcbcbc" stroke-width="1" stroke-dasharray="3 .8 2 .6"/><path d="M1442.3 833.4V840.0" stroke="#d0d0d0" stroke-width=".6"/><path d="M1437.1 830.3V833.4" stroke="#c0c0c0" stroke-width=".6"/><rect x="1475.0" y="833.4" width="70.0" height="6.6" fill="none" stroke="#d2d2d2" stroke-width=".6"/><path d="M1476.5 835.2H1512.4M1515.4 835.2H1543.5" stroke="#b0b0b0" stroke-width="1.2" stroke-dasharray="4 .7 2.5 .6 5 .8"/><path d="M1487.6 838.3H1509.9M1519.5 838.3H1540.8" stroke="#bcbcbc" stroke-width="1" stroke-dasharray="3 .8 2 .6"/><path d="M1513.9 833.4V840.0" stroke="#d0d0d0" stroke-width=".6"/><path d="M1510.0 830.3V833.4" stroke="#c0c0c0" stroke-width=".6"/><rect x="1548.0" y="833.4" width="71.0" height="6.6" fill="none" stroke="#d2d2d2" stroke-width=".6"/><path d="M1549.5 835.2H1594.8M1597.8 835.2H1617.5" stroke="#b0b0b0" stroke-width="1.2" stroke-dasharray="4 .7 2.5 .6 5 .8"/><path d="M1560.8 838.3H1592.3M1602.0 838.3H1614.7" stroke="#bcbcbc" stroke-width="1" stroke-dasharray="3 .8 2 .6"/><path d="M1596.3 833.4V840.0" stroke="#d0d0d0" stroke-width=".6"/><path d="M1583.5 830.3V833.4" stroke="#c0c0c0" stroke-width=".6"/><rect x="1621.0" y="833.4" width="71.5" height="6.6" fill="none" stroke="#d2d2d2" stroke-width=".6"/><path d="M1622.5 835.2H1662.2M1665.2 835.2H1691.0" stroke="#b0b0b0" stroke-width="1.2" stroke-dasharray="4 .7 2.5 .6 5 .8"/><path d="M1633.9 838.3H1659.7M1669.4 838.3H1688.2" stroke="#bcbcbc" stroke-width="1" stroke-dasharray="3 .8 2 .6"/><path d="M1663.7 833.4V840.0" stroke="#d0d0d0" stroke-width=".6"/><path d="M1656.8 830.3V833.4" stroke="#c0c0c0" stroke-width=".6"/><rect x="1694.0" y="833.4" width="70.0" height="6.6" fill="none" stroke="#d2d2d2" stroke-width=".6"/><path d="M1695.5 835.2H1741.1M1744.1 835.2H1762.5" stroke="#b0b0b0" stroke-width="1.2" stroke-dasharray="4 .7 2.5 .6 5 .8"/><path d="M1706.6 838.3H1738.6M1748.2 838.3H1759.8" stroke="#bcbcbc" stroke-width="1" stroke-dasharray="3 .8 2 .6"/><path d="M1742.6 833.4V840.0" stroke="#d0d0d0" stroke-width=".6"/><path d="M1729.0 830.3V833.4" stroke="#c0c0c0" stroke-width=".6"/><rect x="1766.0" y="833.4" width="71.5" height="6.6" fill="none" stroke="#d2d2d2" stroke-width=".6"/><path d="M1767.5 835.2H1813.4M1816.4 835.2H1836.0" stroke="#b0b0b0" stroke-width="1.2" stroke-dasharray="4 .7 2.5 .6 5 .8"/><path d="M1778.9 838.3H1810.9M1820.7 838.3H1833.2" stroke="#bcbcbc" stroke-width="1" stroke-dasharray="3 .8 2 .6"/><path d="M1814.9 833.4V840.0" stroke="#d0d0d0" stroke-width=".6"/><path d="M1801.8 830.3V833.4" stroke="#c0c0c0" stroke-width=".6"/><rect x="1839.0" y="833.4" width="73.5" height="6.6" fill="none" stroke="#d2d2d2" stroke-width=".6"/><path d="M1840.5 835.2H1882.1M1885.1 835.2H1911.0" stroke="#b0b0b0" stroke-width="1.2" stroke-dasharray="4 .7 2.5 .6 5 .8"/><path d="M1852.2 838.3H1879.6M1889.5 838.3H1908.1" stroke="#bcbcbc" stroke-width="1" stroke-dasharray="3 .8 2 .6"/><path d="M1883.6 833.4V840.0" stroke="#d0d0d0" stroke-width=".6"/><path d="M1875.8 830.3V833.4" stroke="#c0c0c0" stroke-width=".6"/><rect x="1080.0" y="842.7" width="37.0" height="6.6" fill="none" stroke="#d2d2d2" stroke-width=".6"/><path d="M1081.5 844.5H1101.4M1104.4 844.5H1115.5" stroke="#b0b0b0" stroke-width="1.2" stroke-dasharray="4 .7 2.5 .6 5 .8"/><path d="M1086.7 847.6H1098.9M1105.9 847.6H1114.8" stroke="#bcbcbc" stroke-width="1" stroke-dasharray="3 .8 2 .6"/><path d="M1102.9 842.7V849.3" stroke="#d0d0d0" stroke-width=".6"/><path d="M1098.5 840.0V842.7" stroke="#c0c0c0" stroke-width=".6"/><rect x="1135.0" y="842.7" width="37.0" height="6.6" fill="none" stroke="#d2d2d2" stroke-width=".6"/><path d="M1136.5 844.5H1156.7M1159.7 844.5H1170.5" stroke="#b0b0b0" stroke-width="1.2" stroke-dasharray="4 .7 2.5 .6 5 .8"/><path d="M1141.7 847.6H1154.2M1161.2 847.6H1169.8" stroke="#bcbcbc" stroke-width="1" stroke-dasharray="3 .8 2 .6"/><path d="M1158.2 842.7V849.3" stroke="#d0d0d0" stroke-width=".6"/><path d="M1153.5 840.0V842.7" stroke="#c0c0c0" stroke-width=".6"/><rect x="1182.6" y="842.7" width="38.4" height="6.6" fill="none" stroke="#d2d2d2" stroke-width=".6"/><path d="M1184.1 844.5H1205.9M1208.9 844.5H1219.5" stroke="#b0b0b0" stroke-width="1.2" stroke-dasharray="4 .7 2.5 .6 5 .8"/><path d="M1189.5 847.6H1203.4M1210.5 847.6H1218.7" stroke="#bcbcbc" stroke-width="1" stroke-dasharray="3 .8 2 .6"/><path d="M1207.4 842.7V849.3" stroke="#d0d0d0" stroke-width=".6"/><path d="M1201.8 840.0V842.7" stroke="#c0c0c0" stroke-width=".6"/><rect x="1247.5" y="842.7" width="37.5" height="6.6" fill="none" stroke="#d2d2d2" stroke-width=".6"/><path d="M1249.0 844.5H1270.0M1273.0 844.5H1283.5" stroke="#b0b0b0" stroke-width="1.2" stroke-dasharray="4 .7 2.5 .6 5 .8"/><path d="M1254.2 847.6H1267.5M1274.5 847.6H1282.8" stroke="#bcbcbc" stroke-width="1" stroke-dasharray="3 .8 2 .6"/><path d="M1271.5 842.7V849.3" stroke="#d0d0d0" stroke-width=".6"/><path d="M1266.2 840.0V842.7" stroke="#c0c0c0" stroke-width=".6"/><rect x="1372.5" y="842.7" width="55.5" height="6.6" fill="none" stroke="#d2d2d2" stroke-width=".6"/><path d="M1374.0 844.5H1406.2M1409.2 844.5H1426.5" stroke="#b0b0b0" stroke-width="1.2" stroke-dasharray="4 .7 2.5 .6 5 .8"/><path d="M1382.5 847.6H1403.7M1412.1 847.6H1424.7" stroke="#bcbcbc" stroke-width="1" stroke-dasharray="3 .8 2 .6"/><path d="M1407.7 842.7V849.3" stroke="#d0d0d0" stroke-width=".6"/><path d="M1400.2 840.0V842.7" stroke="#c0c0c0" stroke-width=".6"/><rect x="1501.0" y="842.7" width="37.0" height="6.6" fill="none" stroke="#d2d2d2" stroke-width=".6"/><path d="M1502.5 844.5H1523.3M1526.3 844.5H1536.5" stroke="#b0b0b0" stroke-width="1.2" stroke-dasharray="4 .7 2.5 .6 5 .8"/><path d="M1507.7 847.6H1520.8M1527.8 847.6H1535.8" stroke="#bcbcbc" stroke-width="1" stroke-dasharray="3 .8 2 .6"/><path d="M1524.8 842.7V849.3" stroke="#d0d0d0" stroke-width=".6"/><path d="M1519.5 840.0V842.7" stroke="#c0c0c0" stroke-width=".6"/><rect x="1572.5" y="842.7" width="36.5" height="6.6" fill="none" stroke="#d2d2d2" stroke-width=".6"/><path d="M1574.0 844.5H1596.2M1599.2 844.5H1607.5" stroke="#b0b0b0" stroke-width="1.2" stroke-dasharray="4 .7 2.5 .6 5 .8"/><path d="M1579.1 847.6H1593.7M1600.6 847.6H1606.8" stroke="#bcbcbc" stroke-width="1" stroke-dasharray="3 .8 2 .6"/><path d="M1597.7 842.7V849.3" stroke="#d0d0d0" stroke-width=".6"/><path d="M1590.8 840.0V842.7" stroke="#c0c0c0" stroke-width=".6"/><rect x="1629.0" y="842.7" width="38.0" height="6.6" fill="none" stroke="#d2d2d2" stroke-width=".6"/><path d="M1630.5 844.5H1651.3M1654.3 844.5H1665.5" stroke="#b0b0b0" stroke-width="1.2" stroke-dasharray="4 .7 2.5 .6 5 .8"/><path d="M1635.8 847.6H1648.8M1655.8 847.6H1664.7" stroke="#bcbcbc" stroke-width="1" stroke-dasharray="3 .8 2 .6"/><path d="M1652.8 842.7V849.3" stroke="#d0d0d0" stroke-width=".6"/><path d="M1648.0 840.0V842.7" stroke="#c0c0c0" stroke-width=".6"/><rect x="1693.0" y="842.7" width="39.0" height="6.6" fill="none" stroke="#d2d2d2" stroke-width=".6"/><path d="M1694.5 844.5H1715.5M1718.5 844.5H1730.5" stroke="#b0b0b0" stroke-width="1.2" stroke-dasharray="4 .7 2.5 .6 5 .8"/><path d="M1700.0 847.6H1713.0M1720.1 847.6H1729.7" stroke="#bcbcbc" stroke-width="1" stroke-dasharray="3 .8 2 .6"/><path d="M1717.0 842.7V849.3" stroke="#d0d0d0" stroke-width=".6"/><path d="M1712.5 840.0V842.7" stroke="#c0c0c0" stroke-width=".6"/><rect x="1811.0" y="842.7" width="56.0" height="6.6" fill="none" stroke="#d2d2d2" stroke-width=".6"/><path d="M1812.5 844.5H1846.4M1849.4 844.5H1865.5" stroke="#b0b0b0" stroke-width="1.2" stroke-dasharray="4 .7 2.5 .6 5 .8"/><path d="M1821.1 847.6H1843.9M1852.3 847.6H1863.6" stroke="#bcbcbc" stroke-width="1" stroke-dasharray="3 .8 2 .6"/><path d="M1847.9 842.7V849.3" stroke="#d0d0d0" stroke-width=".6"/><path d="M1839.0 840.0V842.7" stroke="#c0c0c0" stroke-width=".6"/><rect x="1122.0" y="852.2" width="88.0" height="6.6" fill="none" stroke="#d2d2d2" stroke-width=".6"/><path d="M1123.5 854.0H1172.0M1175.0 854.0H1208.5" stroke="#b0b0b0" stroke-width="1.2" stroke-dasharray="4 .7 2.5 .6 5 .8"/><path d="M1137.8 857.1H1169.5M1180.6 857.1H1204.7" stroke="#bcbcbc" stroke-width="1" stroke-dasharray="3 .8 2 .6"/><path d="M1173.5 852.2V858.8" stroke="#d0d0d0" stroke-width=".6"/><path d="M1166.0 849.3V852.2" stroke="#c0c0c0" stroke-width=".6"/><rect x="1383.0" y="852.2" width="36.0" height="6.6" fill="none" stroke="#d2d2d2" stroke-width=".6"/><path d="M1384.5 854.0H1402.9M1405.9 854.0H1417.5" stroke="#b0b0b0" stroke-width="1.2" stroke-dasharray="4 .7 2.5 .6 5 .8"/><path d="M1389.5 857.1H1400.4M1407.3 857.1H1416.8" stroke="#bcbcbc" stroke-width="1" stroke-dasharray="3 .8 2 .6"/><path d="M1404.4 852.2V858.8" stroke="#d0d0d0" stroke-width=".6"/><path d="M1401.0 849.3V852.2" stroke="#c0c0c0" stroke-width=".6"/><rect x="1576.7" y="852.2" width="86.3" height="6.6" fill="none" stroke="#d2d2d2" stroke-width=".6"/><path d="M1578.2 854.0H1635.3M1638.3 854.0H1661.5" stroke="#b0b0b0" stroke-width="1.2" stroke-dasharray="4 .7 2.5 .6 5 .8"/><path d="M1592.2 857.1H1632.8M1643.7 857.1H1657.8" stroke="#bcbcbc" stroke-width="1" stroke-dasharray="3 .8 2 .6"/><path d="M1636.8 852.2V858.8" stroke="#d0d0d0" stroke-width=".6"/><path d="M1619.8 849.3V852.2" stroke="#c0c0c0" stroke-width=".6"/><rect x="1821.0" y="852.2" width="36.0" height="6.6" fill="none" stroke="#d2d2d2" stroke-width=".6"/><path d="M1822.5 854.0H1842.1M1845.1 854.0H1855.5" stroke="#b0b0b0" stroke-width="1.2" stroke-dasharray="4 .7 2.5 .6 5 .8"/><path d="M1827.5 857.1H1839.6M1846.5 857.1H1854.8" stroke="#bcbcbc" stroke-width="1" stroke-dasharray="3 .8 2 .6"/><path d="M1843.6 852.2V858.8" stroke="#d0d0d0" stroke-width=".6"/><path d="M1839.0 849.3V852.2" stroke="#c0c0c0" stroke-width=".6"/></svg></div><svg class="a" style="left:1350px;top:11px" width="20" height="26" viewBox="0 0 20 26">
<path d="M2 2V19.5L6.2 15.6L9 22.3L11.8 21.1L9.1 14.6H14.8Z" fill="#fff" stroke="#000" stroke-width="1.2" stroke-linejoin="round"/>
</svg>
</body></html>
